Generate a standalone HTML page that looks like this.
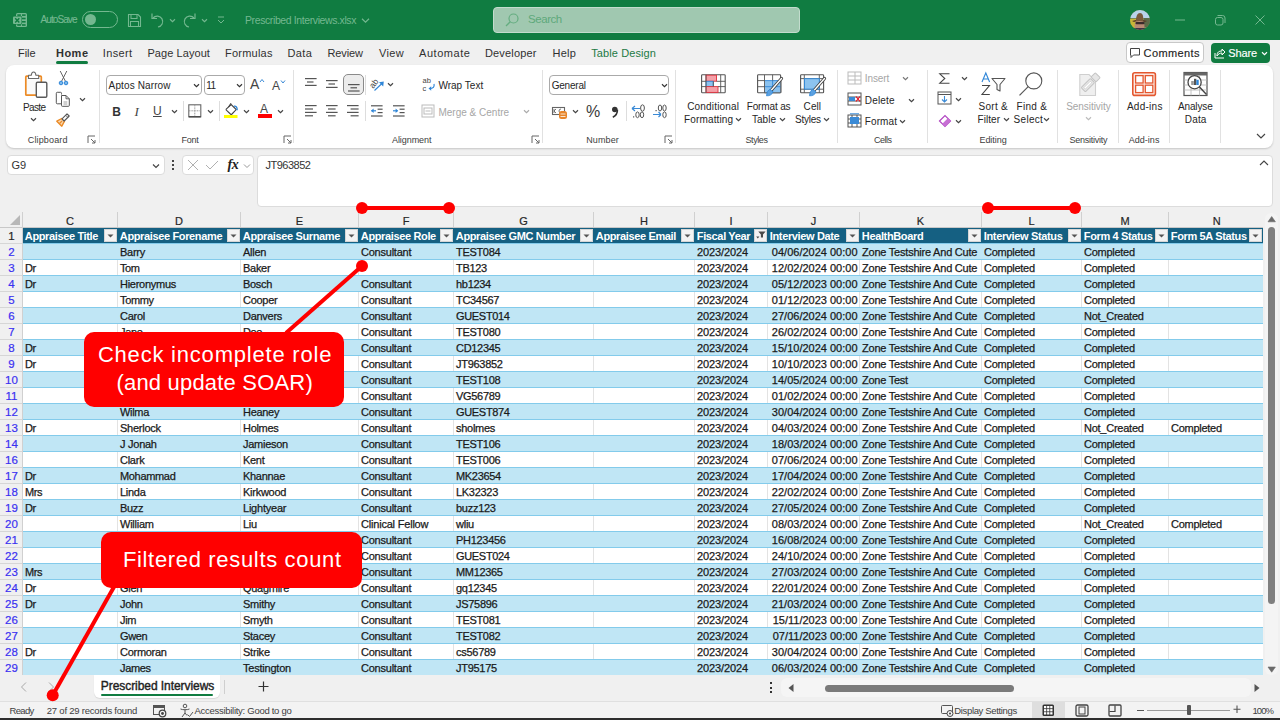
<!DOCTYPE html>
<html><head><meta charset="utf-8"><style>
html,body{margin:0;padding:0;}
body{width:1280px;height:720px;overflow:hidden;position:relative;background:#f0f0f0;font-family:"Liberation Sans", sans-serif;}
.t{position:absolute;white-space:nowrap;}
.b{position:absolute;}
svg.b{overflow:visible;}
</style></head><body>
<div class="b" style="left:0px;top:0px;width:1280px;height:40px;background:#107c41;"></div><svg class="b" style="left:13px;top:13px;" width="15" height="15" viewBox="0 0 15 15"><rect x="3" y="0" width="11" height="14" rx="1.5" fill="#74b890"/><g fill="#107c41"><rect x="4.3" y="1.3" width="3.6" height="1.6"/><rect x="9" y="1.3" width="3.6" height="1.6"/><rect x="9" y="4.7" width="3.6" height="1.6"/><rect x="9" y="8" width="3.6" height="1.6"/><rect x="4.3" y="11.2" width="3.6" height="1.6"/><rect x="9" y="11.2" width="3.6" height="1.6"/></g><rect x="-0.5" y="3" width="9.5" height="8.5" rx="1" fill="#107c41"/><rect x="0" y="3.5" width="8.5" height="7.5" rx="1" fill="#74b890"/><path d="M2.2 5.2 L6.3 9.5 M6.3 5.2 L2.2 9.5" stroke="#107c41" stroke-width="1.4"/></svg><div class="t" style="left:40.5px;top:13.3px;font-size:10px;line-height:14px;color:#74b890;font-weight:normal;letter-spacing:-0.911px;-webkit-text-stroke:0.15px currentColor;">AutoSave</div><div class="b" style="left:82px;top:11px;width:36px;height:17px;background:none;border:1.5px solid #74b890;border-radius:9px;box-sizing:border-box;"></div><div class="b" style="left:85px;top:14px;width:11px;height:11px;border-radius:50%;background:#74b890"></div><svg class="b" style="left:127px;top:13px;" width="15" height="15" viewBox="0 0 15 15"><path d="M1.5 1.5 H11 L13.5 4 V13.5 H1.5 Z" fill="none" stroke="#74b890" stroke-width="1.1"/><rect x="4" y="1.5" width="6" height="4" fill="none" stroke="#74b890" stroke-width="1"/><rect x="3.5" y="8.5" width="8" height="5" fill="none" stroke="#74b890" stroke-width="1"/></svg><svg class="b" style="left:150px;top:12px;" width="15" height="17" viewBox="0 0 15 17"><path d="M3 6 A5.5 5.5 0 1 1 8 15" fill="none" stroke="#74b890" stroke-width="1.2"/><path d="M2 1.5 V6.5 H7" fill="none" stroke="#74b890" stroke-width="1.2"/></svg><svg class="b" style="left:168.5px;top:17.5px;" width="7.0" height="5.0" viewBox="0 0 7.0 5.0"><path d="M1 1.25 L3.5 3.75 L6.0 1.25" fill="none" stroke="#74b890" stroke-width="1.15"/></svg><svg class="b" style="left:182px;top:12px;" width="15" height="17" viewBox="0 0 15 17"><path d="M12 6 A5.5 5.5 0 1 0 7 15" fill="none" stroke="#74b890" stroke-width="1.2"/><path d="M13 1.5 V6.5 H8" fill="none" stroke="#74b890" stroke-width="1.2"/></svg><svg class="b" style="left:200.5px;top:17.5px;" width="7.0" height="5.0" viewBox="0 0 7.0 5.0"><path d="M1 1.25 L3.5 3.75 L6.0 1.25" fill="none" stroke="#74b890" stroke-width="1.15"/></svg><svg class="b" style="left:216px;top:15px;" width="10" height="10" viewBox="0 0 10 10"><line x1="2" y1="2" x2="8" y2="2" stroke="#74b890"/><path d="M2 5 L5 8 L8 5" fill="none" stroke="#74b890"/></svg><div class="t" style="left:245px;top:13.25px;font-size:10.5px;line-height:14.5px;color:#74b890;font-weight:normal;letter-spacing:-0.396px;">Prescribed Interviews.xlsx</div><svg class="b" style="left:360.5px;top:16.5px;" width="9.0" height="7.0" viewBox="0 0 9.0 7.0"><path d="M1 1.75 L4.5 5.25 L8.0 1.75" fill="none" stroke="#74b890" stroke-width="1.15"/></svg><div class="b" style="left:493px;top:7px;width:307px;height:26px;background:#a0c8b0;border:1px solid #c3dccd;border-radius:4px;box-sizing:border-box;"></div><svg class="b" style="left:504px;top:12px;" width="16" height="16" viewBox="0 0 16 16"><circle cx="9.5" cy="6.5" r="4.5" fill="none" stroke="#64ad80" stroke-width="1.2"/><line x1="6.2" y1="9.8" x2="2" y2="14" stroke="#64ad80" stroke-width="1.3"/></svg><div class="t" style="left:528px;top:12.25px;font-size:11.5px;line-height:15.5px;color:#5ea97b;font-weight:normal;letter-spacing:-0.444px;">Search</div><svg class="b" style="left:1130px;top:10px;" width="20" height="20" viewBox="0 0 20 20"><defs><clipPath id="av"><circle cx="10" cy="10" r="10"/></clipPath></defs><g clip-path="url(#av)"><rect width="20" height="20" fill="#7f8a55"/><rect width="20" height="8" fill="#b9d3ea"/><rect x="0" y="9" width="6" height="9" fill="#c8b637"/><rect x="14" y="8" width="6" height="9" fill="#5c6a48"/><ellipse cx="9.5" cy="16" rx="5" ry="7" fill="#b88a73"/><path d="M2 11 Q9 8 17 11 L15 12 Q9 10 4 12 Z" fill="#5a3c28"/><path d="M6 11 Q6 3 10 3 Q14 3 13 11 Z" fill="#7a5a3c"/><rect x="5.5" y="12" width="9" height="2.2" rx="1" fill="#3a2a2a"/><rect x="0" y="18" width="20" height="3" fill="#3c3545"/></g></svg><svg class="b" style="left:1174px;top:14px;" width="12" height="12" viewBox="0 0 12 12"><line x1="1" y1="6" x2="11" y2="6" stroke="#74b890" stroke-width="1"/></svg><svg class="b" style="left:1214px;top:14px;" width="12" height="12" viewBox="0 0 12 12"><rect x="1.5" y="3.5" width="7.5" height="7.5" rx="2" fill="none" stroke="#74b890"/><path d="M3.5 1.5 H8.5 A2.5 2.5 0 0 1 11 4 V9" fill="none" stroke="#74b890"/></svg><svg class="b" style="left:1254px;top:14px;" width="12" height="12" viewBox="0 0 12 12"><path d="M1.5 1.5 L10.5 10.5 M10.5 1.5 L1.5 10.5" stroke="#74b890" stroke-width="1"/></svg><div class="t" style="left:18px;top:46.0px;font-size:11px;line-height:15px;color:#303030;font-weight:normal;letter-spacing:-0.073px;">File</div><div class="t" style="left:56px;top:46.0px;font-size:11px;line-height:15px;color:#303030;font-weight:bold;letter-spacing:0.479px;">Home</div><div class="t" style="left:102.8px;top:46.0px;font-size:11px;line-height:15px;color:#303030;font-weight:normal;letter-spacing:0.334px;">Insert</div><div class="t" style="left:147.4px;top:46.0px;font-size:11px;line-height:15px;color:#303030;font-weight:normal;letter-spacing:0.076px;">Page Layout</div><div class="t" style="left:225px;top:46.0px;font-size:11px;line-height:15px;color:#303030;font-weight:normal;letter-spacing:0.222px;">Formulas</div><div class="t" style="left:287.4px;top:46.0px;font-size:11px;line-height:15px;color:#303030;font-weight:normal;letter-spacing:0.383px;">Data</div><div class="t" style="left:327.4px;top:46.0px;font-size:11px;line-height:15px;color:#303030;font-weight:normal;letter-spacing:-0.092px;">Review</div><div class="t" style="left:378.9px;top:46.0px;font-size:11px;line-height:15px;color:#303030;font-weight:normal;letter-spacing:0.42px;">View</div><div class="t" style="left:419px;top:46.0px;font-size:11px;line-height:15px;color:#303030;font-weight:normal;letter-spacing:0.539px;">Automate</div><div class="t" style="left:484.9px;top:46.0px;font-size:11px;line-height:15px;color:#303030;font-weight:normal;letter-spacing:0.18px;">Developer</div><div class="t" style="left:552.4px;top:46.0px;font-size:11px;line-height:15px;color:#303030;font-weight:normal;letter-spacing:0.325px;">Help</div><div class="t" style="left:591.2px;top:46.0px;font-size:11px;line-height:15px;color:#1d7a45;font-weight:normal;letter-spacing:0.107px;">Table Design</div><div class="b" style="left:56px;top:61px;width:32px;height:3px;background:#107c41;border-radius:2px;"></div><div class="b" style="left:1126px;top:42px;width:78px;height:21px;background:#fff;border:1px solid #c8c8c8;border-radius:4px;box-sizing:border-box;"></div><svg class="b" style="left:1129px;top:47px;" width="12" height="12" viewBox="0 0 12 12"><path d="M1.5 1.5 H10.5 V8 H4.5 L2 10.5 V8 H1.5 Z" fill="none" stroke="#444" stroke-width="1" stroke-linejoin="round"/></svg><div class="t" style="left:1143.6px;top:45.5px;font-size:11px;line-height:15px;color:#242424;font-weight:normal;letter-spacing:0.387px;-webkit-text-stroke:0.15px currentColor;">Comments</div><div class="b" style="left:1211px;top:43px;width:59px;height:20px;background:#107c41;border-radius:4px;"></div><svg class="b" style="left:1213px;top:46px;" width="14" height="14" viewBox="0 0 14 14"><path d="M2 7 V12 H11" fill="none" stroke="#fff" stroke-width="1"/><path d="M4 10 C4 6 6 5 9 5 V3 L12 6 L9 9 V7 C7 7 5 8 4 10 Z" fill="none" stroke="#fff" stroke-width="1"/></svg><div class="t" style="left:1228.3px;top:45.5px;font-size:11px;line-height:15px;color:#fff;font-weight:normal;letter-spacing:-0.144px;-webkit-text-stroke:0.15px currentColor;">Share</div><svg class="b" style="left:1260.5px;top:50.5px;" width="7.0" height="5.0" viewBox="0 0 7.0 5.0"><path d="M1 1.25 L3.5 3.75 L6.0 1.25" fill="none" stroke="#fff" stroke-width="1.15"/></svg><div class="b" style="left:6px;top:65px;width:1267px;height:83px;background:#fff;border-radius:8px;box-shadow:0 1px 2px rgba(0,0,0,0.18);"></div><div class="b" style="left:99px;top:70px;width:1px;height:73px;background:#e1e1e1;"></div><div class="b" style="left:293px;top:70px;width:1px;height:73px;background:#e1e1e1;"></div><div class="b" style="left:542px;top:70px;width:1px;height:73px;background:#e1e1e1;"></div><div class="b" style="left:675px;top:70px;width:1px;height:73px;background:#e1e1e1;"></div><div class="b" style="left:837px;top:70px;width:1px;height:73px;background:#e1e1e1;"></div><div class="b" style="left:927px;top:70px;width:1px;height:73px;background:#e1e1e1;"></div><div class="b" style="left:1057px;top:70px;width:1px;height:73px;background:#e1e1e1;"></div><div class="b" style="left:1118px;top:70px;width:1px;height:73px;background:#e1e1e1;"></div><div class="b" style="left:1169px;top:70px;width:1px;height:73px;background:#e1e1e1;"></div><div class="b" style="left:1220px;top:70px;width:1px;height:73px;background:#e1e1e1;"></div><div class="t" style="left:27.8px;top:134.0px;font-size:9px;line-height:13px;color:#404040;font-weight:normal;letter-spacing:0.138px;">Clipboard</div><div class="t" style="left:181.5px;top:134.0px;font-size:9px;line-height:13px;color:#404040;font-weight:normal;letter-spacing:-0.233px;">Font</div><div class="t" style="left:392px;top:134.0px;font-size:9px;line-height:13px;color:#404040;font-weight:normal;letter-spacing:-0.075px;">Alignment</div><div class="t" style="left:586.2px;top:134.0px;font-size:9px;line-height:13px;color:#404040;font-weight:normal;letter-spacing:0.12px;">Number</div><div class="t" style="left:745.5px;top:134.0px;font-size:9px;line-height:13px;color:#404040;font-weight:normal;letter-spacing:-0.42px;">Styles</div><div class="t" style="left:874px;top:134.0px;font-size:9px;line-height:13px;color:#404040;font-weight:normal;letter-spacing:-0.475px;">Cells</div><div class="t" style="left:979.4px;top:134.0px;font-size:9px;line-height:13px;color:#404040;font-weight:normal;letter-spacing:-0.017px;">Editing</div><div class="t" style="left:1069.4px;top:134.0px;font-size:9px;line-height:13px;color:#404040;font-weight:normal;letter-spacing:-0.23px;">Sensitivity</div><div class="t" style="left:1128.7px;top:134.0px;font-size:9px;line-height:13px;color:#404040;font-weight:normal;letter-spacing:0.033px;">Add-ins</div><svg class="b" style="left:87px;top:135px;" width="9" height="9" viewBox="0 0 9 9"><path d="M1 8 V1 H8" fill="none" stroke="#666"/><path d="M4 4 L8 8 M5 8 H8 V5" fill="none" stroke="#666"/></svg><svg class="b" style="left:283px;top:135px;" width="9" height="9" viewBox="0 0 9 9"><path d="M1 8 V1 H8" fill="none" stroke="#666"/><path d="M4 4 L8 8 M5 8 H8 V5" fill="none" stroke="#666"/></svg><svg class="b" style="left:531px;top:135px;" width="9" height="9" viewBox="0 0 9 9"><path d="M1 8 V1 H8" fill="none" stroke="#666"/><path d="M4 4 L8 8 M5 8 H8 V5" fill="none" stroke="#666"/></svg><svg class="b" style="left:664px;top:135px;" width="9" height="9" viewBox="0 0 9 9"><path d="M1 8 V1 H8" fill="none" stroke="#666"/><path d="M4 4 L8 8 M5 8 H8 V5" fill="none" stroke="#666"/></svg><svg class="b" style="left:24px;top:71px;" width="25" height="28" viewBox="0 0 25 28"><rect x="1.8" y="5.2" width="15.5" height="19" rx="0.8" fill="#fafafa" stroke="#ec8b26" stroke-width="1.7"/><path d="M4.5 7.5 V4.3 H7.3 Q7.5 1 9.6 1 Q11.7 1 11.9 4.3 H14.7 V7.5 Z" fill="#fff" stroke="#6a6a6a" stroke-width="1.1" stroke-linejoin="round"/><rect x="12.3" y="11.3" width="10.5" height="15" rx="1.2" fill="#fff" stroke="#5a5a5a" stroke-width="1.4"/></svg><div class="t" style="left:22.9px;top:101.0px;font-size:10px;line-height:14px;color:#262626;font-weight:normal;letter-spacing:-0.595px;">Paste</div><svg class="b" style="left:30.1px;top:117.0px;" width="7.0" height="5.0" viewBox="0 0 7.0 5.0"><path d="M1 1.25 L3.5 3.75 L6.0 1.25" fill="none" stroke="#444" stroke-width="1.15"/></svg><svg class="b" style="left:58px;top:70px;" width="11" height="16" viewBox="0 0 11 16"><path d="M2.2 1 L7.3 11 M8.8 1 L3.7 11" stroke="#555" stroke-width="0.9"/><circle cx="3" cy="13" r="1.8" fill="#7ab8ec" stroke="#2f86d8" stroke-width="1"/><circle cx="8" cy="13" r="1.8" fill="#7ab8ec" stroke="#2f86d8" stroke-width="1"/></svg><svg class="b" style="left:55px;top:91px;" width="16" height="16" viewBox="0 0 16 16"><path d="M6 12.8 H2.3 A1 1 0 0 1 1.3 11.8 V2.3 A1 1 0 0 1 2.3 1.3 H5.5 A1 1 0 0 1 6.5 2.3 V3.5" fill="#fff" stroke="#555" stroke-width="1"/><path d="M6.5 4.5 H11 L14.3 7.8 V14.5 A0.8 0.8 0 0 1 13.5 15.3 H7.3 A0.8 0.8 0 0 1 6.5 14.5 Z" fill="#fff" stroke="#555" stroke-width="1"/><path d="M11 4.5 V7.8 H14.3" fill="none" stroke="#555" stroke-width="0.9"/><line x1="8.5" y1="11" x2="12.3" y2="11" stroke="#888" stroke-width="0.8"/><line x1="8.5" y1="13" x2="12.3" y2="13" stroke="#888" stroke-width="0.8"/></svg><svg class="b" style="left:79.0px;top:97.0px;" width="7.0" height="5.0" viewBox="0 0 7.0 5.0"><path d="M1 1.25 L3.5 3.75 L6.0 1.25" fill="none" stroke="#444" stroke-width="1.15"/></svg><svg class="b" style="left:56px;top:113px;" width="14" height="14" viewBox="0 0 14 14"><path d="M0.8 8.2 L5.8 5.5 L8.5 8.2 L5.8 13.2 Z" fill="#f7d8b5" stroke="#ec8b26" stroke-width="1.4" stroke-linejoin="round"/><path d="M3.5 10.5 L6 8" stroke="#ec8b26" stroke-width="1.2"/><path d="M6 5.8 L8.2 8 L13.2 3 L11 0.8 Z" fill="#fff" stroke="#555" stroke-width="1.1" stroke-linejoin="round"/><path d="M9.6 2.2 L11.8 4.4" stroke="#555" stroke-width="0.9"/></svg><div class="b" style="left:106px;top:75px;width:96px;height:20px;background:#fff;border:1px solid #aaa;border-radius:4px;box-sizing:border-box;"></div><div class="t" style="left:108.6px;top:78.8px;font-size:10px;line-height:14px;color:#262626;font-weight:normal;letter-spacing:0.12px;">Aptos Narrow</div><svg class="b" style="left:192.5px;top:83.0px;" width="7.0" height="5.0" viewBox="0 0 7.0 5.0"><path d="M1 1.25 L3.5 3.75 L6.0 1.25" fill="none" stroke="#333" stroke-width="1.15"/></svg><div class="b" style="left:204px;top:75px;width:41px;height:20px;background:#fff;border:1px solid #aaa;border-radius:4px;box-sizing:border-box;"></div><div class="t" style="left:206.3px;top:78.8px;font-size:10px;line-height:14px;color:#262626;font-weight:normal;letter-spacing:-0.691px;">11</div><svg class="b" style="left:235.5px;top:83.0px;" width="7.0" height="5.0" viewBox="0 0 7.0 5.0"><path d="M1 1.25 L3.5 3.75 L6.0 1.25" fill="none" stroke="#333" stroke-width="1.15"/></svg><div class="t" style="left:250px;top:75.0px;font-size:14px;line-height:18px;color:#444;font-weight:normal;letter-spacing:0px;">A</div><svg class="b" style="left:259px;top:78px;" width="6" height="5" viewBox="0 0 6 5"><path d="M1 4 L3 1.5 L5 4" fill="none" stroke="#3a8ad6" stroke-width="1"/></svg><div class="t" style="left:272px;top:78.0px;font-size:12px;line-height:16px;color:#444;font-weight:normal;letter-spacing:0px;">A</div><svg class="b" style="left:280px;top:79px;" width="6" height="5" viewBox="0 0 6 5"><path d="M1 1.5 L3 4 L5 1.5" fill="none" stroke="#3a8ad6" stroke-width="1"/></svg><div class="t" style="left:112.3px;top:103.5px;font-size:12px;line-height:16px;color:#333;font-weight:bold;letter-spacing:0px;">B</div><div class="t" style="left:134.5px;top:103.0px;font-size:13px;line-height:17px;color:#444;font-weight:normal;letter-spacing:0px;font-family:Liberation Serif;"><i>I</i></div><div class="t" style="left:153px;top:103.0px;font-size:12px;line-height:16px;color:#444;font-weight:normal;letter-spacing:0px;"><u>U</u></div><svg class="b" style="left:170.5px;top:109.0px;" width="7.0" height="5.0" viewBox="0 0 7.0 5.0"><path d="M1 1.25 L3.5 3.75 L6.0 1.25" fill="none" stroke="#444" stroke-width="1.15"/></svg><div class="b" style="left:183px;top:101px;width:1px;height:20px;background:#ddd;"></div><svg class="b" style="left:188px;top:104px;" width="14" height="14" viewBox="0 0 14 14"><rect x="0.8" y="0.8" width="12" height="12" fill="none" stroke="#666" stroke-width="1.1"/><line x1="6.8" y1="1" x2="6.8" y2="13" stroke="#999" stroke-dasharray="1 0.6"/><line x1="1" y1="6.8" x2="13" y2="6.8" stroke="#999" stroke-dasharray="1 0.6"/><line x1="0.8" y1="12.8" x2="12.8" y2="12.8" stroke="#444" stroke-width="1.3"/></svg><svg class="b" style="left:206.5px;top:109.0px;" width="7.0" height="5.0" viewBox="0 0 7.0 5.0"><path d="M1 1.25 L3.5 3.75 L6.0 1.25" fill="none" stroke="#444" stroke-width="1.15"/></svg><div class="b" style="left:219px;top:101px;width:1px;height:20px;background:#ddd;"></div><svg class="b" style="left:224px;top:102px;" width="15" height="18" viewBox="0 0 15 18"><path d="M2.2 7.2 L7.2 2.6 L12.2 7.6 L8 12 Q7.2 12.7 6.4 12 L2.6 8.4 Q1.8 7.8 2.2 7.2 Z" fill="none" stroke="#444" stroke-width="1.1"/><path d="M4.5 5 L7 1.2" stroke="#444" stroke-width="1.1"/><path d="M10 4.2 Q13.3 3.8 13.2 8.2" fill="none" stroke="#2f86d8" stroke-width="1.3"/><rect x="0" y="13" width="13.5" height="3" fill="#ffff00"/></svg><svg class="b" style="left:242.5px;top:109.0px;" width="7.0" height="5.0" viewBox="0 0 7.0 5.0"><path d="M1 1.25 L3.5 3.75 L6.0 1.25" fill="none" stroke="#444" stroke-width="1.15"/></svg><div class="t" style="left:260px;top:101.0px;font-size:12px;line-height:16px;color:#444;font-weight:normal;letter-spacing:0px;">A</div><div class="b" style="left:258px;top:114.3px;width:13.5px;height:3.7px;background:#ff0000;"></div><svg class="b" style="left:276.5px;top:109.0px;" width="7.0" height="5.0" viewBox="0 0 7.0 5.0"><path d="M1 1.25 L3.5 3.75 L6.0 1.25" fill="none" stroke="#444" stroke-width="1.15"/></svg><svg class="b" style="left:305px;top:77.8px;" width="14" height="14" viewBox="0 0 14 14"><rect x="0" y="0.0" width="11.6" height="1.2" fill="#555"/><rect x="2" y="3.4" width="6.5" height="1.2" fill="#555"/><rect x="0" y="6.8" width="11.6" height="1.2" fill="#555"/></svg><svg class="b" style="left:326px;top:80.1px;" width="14" height="14" viewBox="0 0 14 14"><rect x="0" y="0.0" width="11.6" height="1.2" fill="#555"/><rect x="2.5" y="3.4" width="6.5" height="1.2" fill="#555"/><rect x="0" y="6.8" width="11.6" height="1.2" fill="#555"/></svg><div class="b" style="left:343px;top:74px;width:21px;height:21px;background:#ececec;border:1px solid #8a8a8a;border-radius:5px;box-sizing:border-box;"></div><svg class="b" style="left:347.7px;top:83.6px;" width="14" height="14" viewBox="0 0 14 14"><rect x="0" y="0.0" width="11.6" height="1.2" fill="#555"/><rect x="2.5" y="3.2" width="6.5" height="1.2" fill="#555"/><rect x="0" y="6.4" width="11.6" height="1.2" fill="#555"/></svg><div class="b" style="left:365px;top:75px;width:1px;height:20px;background:#ddd;"></div><svg class="b" style="left:369px;top:76px;" width="17" height="16" viewBox="0 0 17 16"><text x="0" y="0" font-size="8.5" fill="#444" font-family="Liberation Sans" transform="translate(4.2 13) rotate(-52)">ab</text><line x1="5.5" y1="14.5" x2="13.5" y2="7" stroke="#2f86d8" stroke-width="1.1"/><path d="M10 6.2 L14.8 5.6 L14.2 10.4 Z" fill="#2f86d8"/></svg><svg class="b" style="left:387.0px;top:82.0px;" width="7.0" height="5.0" viewBox="0 0 7.0 5.0"><path d="M1 1.25 L3.5 3.75 L6.0 1.25" fill="none" stroke="#444" stroke-width="1.15"/></svg><svg class="b" style="left:305px;top:105.2px;" width="14" height="14" viewBox="0 0 14 14"><rect x="0" y="0.0" width="11.6" height="1.2" fill="#555"/><rect x="0" y="3.4" width="8" height="1.2" fill="#555"/><rect x="0" y="6.8" width="11.6" height="1.2" fill="#555"/><rect x="0" y="10.2" width="8" height="1.2" fill="#555"/></svg><svg class="b" style="left:326px;top:105.2px;" width="14" height="14" viewBox="0 0 14 14"><rect x="0" y="0.0" width="11.6" height="1.2" fill="#555"/><rect x="2" y="3.4" width="7.6" height="1.2" fill="#555"/><rect x="0" y="6.8" width="11.6" height="1.2" fill="#555"/><rect x="2" y="10.2" width="7.6" height="1.2" fill="#555"/></svg><svg class="b" style="left:347.4px;top:105.2px;" width="14" height="14" viewBox="0 0 14 14"><rect x="0" y="0.0" width="11.6" height="1.2" fill="#555"/><rect x="3.6" y="3.4" width="8" height="1.2" fill="#555"/><rect x="0" y="6.8" width="11.6" height="1.2" fill="#555"/><rect x="3.6" y="10.2" width="8" height="1.2" fill="#555"/></svg><div class="b" style="left:365px;top:101px;width:1px;height:20px;background:#ddd;"></div><svg class="b" style="left:371px;top:105px;" width="14" height="14" viewBox="0 0 14 14"><rect x="0" y="0.2" width="11.6" height="1.2" fill="#555"/><rect x="6.6" y="3.6" width="5" height="1.2" fill="#555"/><rect x="6.6" y="7" width="5" height="1.2" fill="#555"/><rect x="0" y="10.4" width="11.6" height="1.2" fill="#555"/><path d="M0.3 5.8 H5" stroke="#2f86d8" stroke-width="1.2"/><path d="M0 5.8 L2.6 3.6 V8 Z" fill="#2f86d8"/></svg><svg class="b" style="left:392.5px;top:105px;" width="14" height="14" viewBox="0 0 14 14"><rect x="0" y="0.2" width="11.6" height="1.2" fill="#555"/><rect x="6.6" y="3.6" width="5" height="1.2" fill="#555"/><rect x="6.6" y="7" width="5" height="1.2" fill="#555"/><rect x="0" y="10.4" width="11.6" height="1.2" fill="#555"/><path d="M0 5.8 H4.5" stroke="#2f86d8" stroke-width="1.2"/><path d="M5.2 5.8 L2.6 3.6 V8 Z" fill="#2f86d8"/></svg><svg class="b" style="left:422px;top:76px;" width="14" height="17" viewBox="0 0 14 17"><text x="0.5" y="6.8" font-size="7.5" fill="#444" font-family="Liberation Sans">ab</text><text x="0.5" y="14.5" font-size="7.5" fill="#444" font-family="Liberation Sans">c</text><path d="M12 8 Q13 12.5 7.5 12.5" fill="none" stroke="#2f86d8" stroke-width="1.2"/><path d="M6.5 12.5 L9.2 10.3 V14.7 Z" fill="#2f86d8"/></svg><div class="t" style="left:438.4px;top:78.8px;font-size:10px;line-height:14px;color:#262626;font-weight:normal;letter-spacing:0.02px;">Wrap Text</div><svg class="b" style="left:421px;top:104px;" width="14" height="14" viewBox="0 0 14 14"><rect x="1" y="1" width="12" height="12" fill="none" stroke="#bbb"/><rect x="3" y="4" width="8" height="6" fill="none" stroke="#bbb"/><path d="M4.5 7 H9.5" stroke="#bbb"/></svg><div class="t" style="left:438.4px;top:105.6px;font-size:10px;line-height:14px;color:#a6a6a6;font-weight:normal;letter-spacing:0.008px;">Merge &amp; Centre</div><svg class="b" style="left:522.5px;top:109.0px;" width="7.0" height="5.0" viewBox="0 0 7.0 5.0"><path d="M1 1.25 L3.5 3.75 L6.0 1.25" fill="none" stroke="#aaa" stroke-width="1.15"/></svg><div class="b" style="left:549px;top:75px;width:120px;height:20px;background:#fff;border:1px solid #aaa;border-radius:4px;box-sizing:border-box;"></div><div class="t" style="left:551.7px;top:78.8px;font-size:10px;line-height:14px;color:#262626;font-weight:normal;letter-spacing:-0.213px;">General</div><svg class="b" style="left:660.5px;top:83.0px;" width="7.0" height="5.0" viewBox="0 0 7.0 5.0"><path d="M1 1.25 L3.5 3.75 L6.0 1.25" fill="none" stroke="#333" stroke-width="1.15"/></svg><svg class="b" style="left:551px;top:105px;" width="17" height="14" viewBox="0 0 17 14"><rect x="1.5" y="2.5" width="12" height="7" fill="none" stroke="#666" stroke-width="1.1"/><path d="M3 4 V8 M3 6 L5 4 M3 6 L5 8" stroke="#666" stroke-width="0.9" fill="none"/><path d="M10 4 A1.8 1.8 0 1 0 10 8" stroke="#666" stroke-width="0.9" fill="none"/><rect x="8" y="6" width="8" height="8" rx="2.5" fill="#e8862a"/><path d="M9.5 9 H14.5 M9.5 11.5 H14.5" stroke="#fff" stroke-width="0.8"/></svg><svg class="b" style="left:571.5px;top:108.5px;" width="7.0" height="5.0" viewBox="0 0 7.0 5.0"><path d="M1 1.25 L3.5 3.75 L6.0 1.25" fill="none" stroke="#444" stroke-width="1.15"/></svg><div class="t" style="left:586px;top:102.0px;font-size:16px;line-height:20px;color:#3a3a3a;font-weight:normal;letter-spacing:0px;">%</div><svg class="b" style="left:610px;top:105px;" width="10" height="13" viewBox="0 0 10 13"><circle cx="4.8" cy="4.5" r="2.8" fill="#333"/><path d="M7.4 4.8 Q7.6 10 2.8 12.3" fill="none" stroke="#333" stroke-width="1.6"/></svg><div class="b" style="left:626px;top:101px;width:1px;height:20px;background:#ddd;"></div><svg class="b" style="left:630px;top:103px;" width="16" height="16" viewBox="0 0 16 16"><path d="M2 5.5 H10 M2 5.5 L5 3 M2 5.5 L5 8" fill="none" stroke="#3a8ad6" stroke-width="1.2"/><ellipse cx="12.5" cy="5" rx="1.9" ry="3.2" fill="none" stroke="#555" stroke-width="1"/><rect x="3" y="13.3" width="1.2" height="1.2" fill="#555"/><ellipse cx="7.5" cy="11.8" rx="1.7" ry="2.9" fill="none" stroke="#555" stroke-width="1"/><ellipse cx="12" cy="11.8" rx="1.7" ry="2.9" fill="none" stroke="#555" stroke-width="1"/></svg><svg class="b" style="left:652px;top:103px;" width="16" height="16" viewBox="0 0 16 16"><rect x="3.5" y="7" width="1.2" height="1.2" fill="#555"/><ellipse cx="8" cy="5" rx="1.7" ry="3" fill="none" stroke="#555" stroke-width="1"/><ellipse cx="12.5" cy="5" rx="1.7" ry="3" fill="none" stroke="#555" stroke-width="1"/><path d="M1 11.5 H9 M9 11.5 L6.5 9 M9 11.5 L6.5 14" fill="none" stroke="#3a8ad6" stroke-width="1.2"/><ellipse cx="12.5" cy="11.8" rx="1.7" ry="2.9" fill="none" stroke="#555" stroke-width="1"/></svg><svg class="b" style="left:701px;top:74px;" width="26" height="20" viewBox="0 0 26 20"><rect x="0.6" y="0.8" width="23.6" height="18" rx="0.8" fill="#fff" stroke="#555" stroke-width="1.1"/><rect x="5" y="1.2" width="10.5" height="6" fill="#f4a0a8" stroke="#e0303c" stroke-width="0.9"/><rect x="5" y="7.3" width="7.3" height="5.2" fill="#8cc3f0" stroke="#2f86d8" stroke-width="0.9"/><rect x="5" y="12.6" width="12" height="5.8" fill="#f4a0a8" stroke="#e0303c" stroke-width="0.9"/><path d="M0.6 7.3 H5 M15.5 7.3 H24.2 M0.6 12.6 H5 M17 12.6 H24.2 M12.3 7.3 V12.6 M19.7 0.8 V18.8 M5 0.8 V18.8" stroke="#555" stroke-width="0.9" fill="none"/></svg><div class="t" style="left:687.2px;top:99.8px;font-size:10px;line-height:14px;color:#262626;font-weight:normal;letter-spacing:0.177px;">Conditional</div><div class="t" style="left:684.1px;top:113.2px;font-size:10px;line-height:14px;color:#262626;font-weight:normal;letter-spacing:0.134px;">Formatting</div><svg class="b" style="left:734.5px;top:117.0px;" width="7.0" height="5.0" viewBox="0 0 7.0 5.0"><path d="M1 1.25 L3.5 3.75 L6.0 1.25" fill="none" stroke="#444" stroke-width="1.15"/></svg><svg class="b" style="left:757px;top:74px;" width="28" height="24" viewBox="0 0 28 24"><rect x="0.6" y="0.8" width="23" height="18" rx="0.8" fill="#fff" stroke="#555" stroke-width="1.1"/><rect x="7.5" y="6.6" width="16" height="12.2" fill="#8cc3f0"/><path d="M7.5 6.6 H23.6 M7.5 12.7 H23.6 M15.6 6.6 V18.8" stroke="#2f86d8" stroke-width="0.9"/><path d="M0.6 6.6 H7.5 M0.6 12.7 H7.5 M7.5 0.8 V18.8 M15.6 0.8 V6.6 M24 6.6 V18.8 M7.5 18.8 H23.6" stroke="#555" stroke-width="0.9" fill="none"/><path d="M24.5 4.5 L14 16.5" stroke="#444" stroke-width="3.2" stroke-linecap="round"/><path d="M24.5 4.5 L14 16.5" stroke="#fff" stroke-width="1.4" stroke-linecap="round"/><path d="M12.8 15.3 Q9.5 17 9.5 21.8 Q14.5 22 16 17.8 Z" fill="#5aa0e0" stroke="#2f86d8" stroke-width="0.8"/></svg><div class="t" style="left:746.7px;top:99.8px;font-size:10px;line-height:14px;color:#262626;font-weight:normal;letter-spacing:-0.139px;">Format as</div><div class="t" style="left:752px;top:113.2px;font-size:10px;line-height:14px;color:#262626;font-weight:normal;letter-spacing:0.023px;">Table</div><svg class="b" style="left:778.5px;top:117.0px;" width="7.0" height="5.0" viewBox="0 0 7.0 5.0"><path d="M1 1.25 L3.5 3.75 L6.0 1.25" fill="none" stroke="#444" stroke-width="1.15"/></svg><svg class="b" style="left:800px;top:74px;" width="28" height="24" viewBox="0 0 28 24"><rect x="0.6" y="0.8" width="23" height="18" rx="0.8" fill="#fff" stroke="#555" stroke-width="1.1"/><path d="M0.6 4.6 H23.6 M0.6 15.2 H23.6 M4.3 0.8 V18.8 M19.3 0.8 V18.8" stroke="#555" stroke-width="0.9" fill="none"/><rect x="4.5" y="4.7" width="14.8" height="10.4" fill="#8cc3f0" stroke="#2f86d8" stroke-width="0.9"/><path d="M24.5 4.5 L14 16.5" stroke="#444" stroke-width="3.2" stroke-linecap="round"/><path d="M24.5 4.5 L14 16.5" stroke="#fff" stroke-width="1.4" stroke-linecap="round"/><path d="M12.8 15.3 Q9.5 17 9.5 21.8 Q14.5 22 16 17.8 Z" fill="#5aa0e0" stroke="#2f86d8" stroke-width="0.8"/></svg><div class="t" style="left:803.6px;top:99.8px;font-size:10px;line-height:14px;color:#262626;font-weight:normal;letter-spacing:0.06px;">Cell</div><div class="t" style="left:795px;top:113.2px;font-size:10px;line-height:14px;color:#262626;font-weight:normal;letter-spacing:-0.247px;">Styles</div><svg class="b" style="left:822.5px;top:117.0px;" width="7.0" height="5.0" viewBox="0 0 7.0 5.0"><path d="M1 1.25 L3.5 3.75 L6.0 1.25" fill="none" stroke="#444" stroke-width="1.15"/></svg><svg class="b" style="left:847px;top:71px;" width="15" height="14" viewBox="0 0 15 14"><rect x="1" y="1" width="13" height="12" fill="none" stroke="#bbb"/><line x1="1" y1="5" x2="14" y2="5" stroke="#bbb"/><line x1="1" y1="9" x2="14" y2="9" stroke="#bbb"/><line x1="8" y1="1" x2="8" y2="13" stroke="#bbb"/></svg><div class="t" style="left:864.8px;top:72.1px;font-size:10px;line-height:14px;color:#a6a6a6;font-weight:normal;letter-spacing:-0.123px;">Insert</div><svg class="b" style="left:901.5px;top:76.0px;" width="7.0" height="5.0" viewBox="0 0 7.0 5.0"><path d="M1 1.25 L3.5 3.75 L6.0 1.25" fill="none" stroke="#777" stroke-width="1.15"/></svg><svg class="b" style="left:847px;top:92px;" width="15" height="15" viewBox="0 0 15 15"><rect x="1" y="1" width="13" height="12" fill="none" stroke="#555"/><line x1="1" y1="5" x2="14" y2="5" stroke="#555"/><line x1="1" y1="9" x2="14" y2="9" stroke="#555"/><rect x="2" y="5" width="6" height="4" fill="#3a8ad6"/><path d="M9 4.5 L13 9.5 M13 4.5 L9 9.5" stroke="#e81123" stroke-width="1.2"/></svg><div class="t" style="left:864.8px;top:93.6px;font-size:10px;line-height:14px;color:#262626;font-weight:normal;letter-spacing:0.159px;">Delete</div><svg class="b" style="left:907.5px;top:97.5px;" width="7.0" height="5.0" viewBox="0 0 7.0 5.0"><path d="M1 1.25 L3.5 3.75 L6.0 1.25" fill="none" stroke="#444" stroke-width="1.15"/></svg><svg class="b" style="left:847px;top:113px;" width="15" height="16" viewBox="0 0 15 16"><rect x="1" y="2" width="13" height="12" fill="none" stroke="#555"/><line x1="1" y1="6" x2="14" y2="6" stroke="#555"/><line x1="1" y1="10" x2="14" y2="10" stroke="#555"/><line x1="5" y1="2" x2="5" y2="14" stroke="#555"/><line x1="10" y1="2" x2="10" y2="14" stroke="#555"/><rect x="3" y="4" width="9" height="7" fill="#3a8ad6"/><line x1="3" y1="0.8" x2="12" y2="0.8" stroke="#3a8ad6"/></svg><div class="t" style="left:864.8px;top:114.8px;font-size:10px;line-height:14px;color:#262626;font-weight:normal;letter-spacing:0.106px;">Format</div><svg class="b" style="left:898.5px;top:118.5px;" width="7.0" height="5.0" viewBox="0 0 7.0 5.0"><path d="M1 1.25 L3.5 3.75 L6.0 1.25" fill="none" stroke="#444" stroke-width="1.15"/></svg><svg class="b" style="left:938px;top:72px;" width="13" height="13" viewBox="0 0 13 13"><path d="M11.5 1.8 H1.8 L6.8 6.5 L1.8 11.2 H11.5" fill="none" stroke="#444" stroke-width="1.1" stroke-linejoin="miter"/></svg><svg class="b" style="left:960.5px;top:76.0px;" width="7.0" height="5.0" viewBox="0 0 7.0 5.0"><path d="M1 1.25 L3.5 3.75 L6.0 1.25" fill="none" stroke="#444" stroke-width="1.15"/></svg><svg class="b" style="left:937px;top:91px;" width="16" height="15" viewBox="0 0 16 15"><rect x="1" y="1" width="13" height="12" fill="none" stroke="#555"/><line x1="1" y1="3.5" x2="14" y2="3.5" stroke="#555"/><path d="M7.5 5 V11 M5 8.5 L7.5 11 L10 8.5" fill="none" stroke="#3a8ad6" stroke-width="1.1"/></svg><svg class="b" style="left:954.5px;top:97.0px;" width="7.0" height="5.0" viewBox="0 0 7.0 5.0"><path d="M1 1.25 L3.5 3.75 L6.0 1.25" fill="none" stroke="#444" stroke-width="1.15"/></svg><svg class="b" style="left:938px;top:113px;" width="16" height="14" viewBox="0 0 16 14"><path d="M1.5 8 L7 2.5 L12.5 8 L7 13.5 Z" fill="none" stroke="#b146c2" stroke-width="1.2"/><path d="M4.3 10.8 L9.8 5.3 L12.5 8 L7 13.5 Z" fill="#c770d4"/></svg><svg class="b" style="left:954.5px;top:118.5px;" width="7.0" height="5.0" viewBox="0 0 7.0 5.0"><path d="M1 1.25 L3.5 3.75 L6.0 1.25" fill="none" stroke="#444" stroke-width="1.15"/></svg><svg class="b" style="left:980px;top:72px;" width="27" height="24" viewBox="0 0 27 24"><path d="M2 10 L5.8 1 L9.6 10 M3.3 7 H8.3" fill="none" stroke="#2f86d8" stroke-width="1.1"/><path d="M2 13.5 H9.5 L2 22.5 H9.8" fill="none" stroke="#444" stroke-width="1.1"/><path d="M12 6.5 H25 L20 12.5 V19 L17 17.5 V12.5 Z" fill="#fff" stroke="#555" stroke-width="1.1" stroke-linejoin="round"/></svg><div class="t" style="left:978.4px;top:99.8px;font-size:10px;line-height:14px;color:#262626;font-weight:normal;letter-spacing:0.321px;">Sort &amp;</div><div class="t" style="left:977.5px;top:113.2px;font-size:10px;line-height:14px;color:#262626;font-weight:normal;letter-spacing:0.056px;">Filter</div><svg class="b" style="left:1002.5px;top:117.0px;" width="7.0" height="5.0" viewBox="0 0 7.0 5.0"><path d="M1 1.25 L3.5 3.75 L6.0 1.25" fill="none" stroke="#444" stroke-width="1.15"/></svg><svg class="b" style="left:1017px;top:71px;" width="28" height="26" viewBox="0 0 28 26"><circle cx="16.8" cy="9.9" r="8" fill="#fff" stroke="#555" stroke-width="1.1"/><line x1="11.2" y1="15.6" x2="2.5" y2="24.3" stroke="#555" stroke-width="1.2"/></svg><div class="t" style="left:1016.5px;top:99.8px;font-size:10px;line-height:14px;color:#262626;font-weight:normal;letter-spacing:0.279px;">Find &amp;</div><div class="t" style="left:1013.6px;top:113.2px;font-size:10px;line-height:14px;color:#262626;font-weight:normal;letter-spacing:0.301px;">Select</div><svg class="b" style="left:1042.5px;top:117.0px;" width="7.0" height="5.0" viewBox="0 0 7.0 5.0"><path d="M1 1.25 L3.5 3.75 L6.0 1.25" fill="none" stroke="#444" stroke-width="1.15"/></svg><svg class="b" style="left:1078px;top:71px;" width="25" height="26" viewBox="0 0 25 26"><path d="M1.8 3.5 H11 L17.5 10 V24.5 H1.8 Z" fill="#efefef" stroke="#cfcfcf" stroke-width="1.1"/><g transform="rotate(-45 12 12)"><rect x="2.5" y="9" width="13" height="6" rx="1" fill="#e6e6e6" stroke="#c4c4c4" stroke-width="1"/><rect x="4.5" y="11" width="9" height="2" fill="#fff" stroke="#c4c4c4" stroke-width="0.6"/><rect x="17" y="8.5" width="6" height="7" rx="0.8" fill="#e6e6e6" stroke="#c4c4c4" stroke-width="1"/></g></svg><div class="t" style="left:1066.2px;top:99.8px;font-size:10px;line-height:14px;color:#a6a6a6;font-weight:normal;letter-spacing:-0.052px;">Sensitivity</div><svg class="b" style="left:1084.5px;top:116.0px;" width="7.0" height="5.0" viewBox="0 0 7.0 5.0"><path d="M1 1.25 L3.5 3.75 L6.0 1.25" fill="none" stroke="#bbb" stroke-width="1.15"/></svg><svg class="b" style="left:1131px;top:71px;" width="26" height="26" viewBox="0 0 26 26"><rect x="1.8" y="1.8" width="22.6" height="22.6" rx="2" fill="#fcefea" stroke="#e4572e" stroke-width="1.6"/><rect x="4.6" y="4.6" width="7.5" height="7.4" fill="#fff" stroke="#e4572e" stroke-width="1.3"/><rect x="14.3" y="4.6" width="7.5" height="7.4" fill="#fff" stroke="#e4572e" stroke-width="1.3"/><rect x="4.6" y="14.2" width="7.5" height="7.4" fill="#fff" stroke="#e4572e" stroke-width="1.3"/><rect x="14.3" y="14.2" width="7.5" height="7.4" fill="#fff" stroke="#e4572e" stroke-width="1.3"/></svg><div class="t" style="left:1126.9px;top:99.8px;font-size:10px;line-height:14px;color:#262626;font-weight:normal;letter-spacing:0.266px;">Add-ins</div><svg class="b" style="left:1183px;top:71px;" width="26" height="26" viewBox="0 0 26 26"><rect x="1" y="1.5" width="23" height="23" fill="#fff" stroke="#555" stroke-width="1.2"/><rect x="1" y="1.5" width="23" height="3" fill="#666"/><path d="M1 9 H24 M1 14 H24 M1 19 H24 M8 4.5 V24.5 M16.5 4.5 V24.5" stroke="#b5b5b5" stroke-width="0.8"/><circle cx="11.6" cy="11.2" r="6.6" fill="#fff" stroke="#444" stroke-width="1.3"/><rect x="8.2" y="10" width="2.6" height="4" fill="#9a9a9a"/><rect x="11" y="7.8" width="2.3" height="6.2" fill="#555"/><rect x="13.3" y="8.8" width="2.4" height="5.2" fill="#2f86d8"/><line x1="16.5" y1="16" x2="23.5" y2="23.5" stroke="#444" stroke-width="1.4"/></svg><div class="t" style="left:1178px;top:99.8px;font-size:10px;line-height:14px;color:#262626;font-weight:normal;letter-spacing:-0.146px;">Analyse</div><div class="t" style="left:1184.8px;top:113.2px;font-size:10px;line-height:14px;color:#262626;font-weight:normal;letter-spacing:0.158px;">Data</div><div class="t" style="left:1195px;top:133.0px;font-size:10px;line-height:14px;color:#262626;font-weight:normal;letter-spacing:0px;"></div><svg class="b" style="left:1256px;top:132px;" width="10" height="8" viewBox="0 0 10 8"><path d="M1 2.0 L5 6.0 L9 2.0" fill="none" stroke="#444" stroke-width="1.15"/></svg><div class="b" style="left:7px;top:155px;width:158px;height:20px;background:#fff;border:1px solid #dcdcdc;border-radius:4px;box-sizing:border-box;"></div><div class="t" style="left:11.5px;top:157.5px;font-size:11px;line-height:15px;color:#333;font-weight:normal;letter-spacing:0px;">G9</div><svg class="b" style="left:152px;top:162.5px;" width="8" height="6" viewBox="0 0 8 6"><path d="M1 1.5 L4 4.5 L7 1.5" fill="none" stroke="#444" stroke-width="1.15"/></svg><div class="b" style="left:172px;top:160px;width:2px;height:2px;background:#444;"></div><div class="b" style="left:172px;top:164px;width:2px;height:2px;background:#444;"></div><div class="b" style="left:172px;top:168px;width:2px;height:2px;background:#444;"></div><div class="b" style="left:182px;top:155px;width:72px;height:20px;background:#fff;border:1px solid #dcdcdc;border-radius:4px;box-sizing:border-box;"></div><svg class="b" style="left:186px;top:158px;" width="14" height="14" viewBox="0 0 14 14"><path d="M2 2 L12 12 M12 2 L2 12" stroke="#b0b0b0" stroke-width="1"/></svg><svg class="b" style="left:205px;top:158px;" width="14" height="14" viewBox="0 0 14 14"><path d="M1 7 L5 11 L13 3" fill="none" stroke="#b0b0b0" stroke-width="1"/></svg><div class="t" style="left:227.5px;top:155.5px;font-size:14px;line-height:18px;color:#222;font-weight:bold;letter-spacing:0px;font-family:Liberation Serif;letter-spacing:-0.5px;"><i>fx</i></div><svg class="b" style="left:243px;top:162.5px;" width="8" height="6" viewBox="0 0 8 6"><path d="M1 1.5 L4 4.5 L7 1.5" fill="none" stroke="#999" stroke-width="1"/></svg><div class="b" style="left:257px;top:155px;width:1016px;height:52px;background:#fff;border:1px solid #dcdcdc;border-radius:4px;box-sizing:border-box;"></div><div class="t" style="left:265.5px;top:157.5px;font-size:11px;line-height:15px;color:#333;font-weight:normal;letter-spacing:-0.496px;">JT963852</div><svg class="b" style="left:1258px;top:158px;" width="12" height="10" viewBox="0 0 12 10"><path d="M2 7 L6 3 L10 7" fill="none" stroke="#444" stroke-width="1.1"/></svg><div class="b" style="left:0px;top:212px;width:1263px;height:16px;background:#f0f0f0;"></div><div class="t" style="left:-230.0px;width:600px;text-align:center;top:213.5px;font-size:11px;line-height:15px;color:#262626;font-weight:normal;letter-spacing:0px;-webkit-text-stroke:0.2px #262626;">C</div><div class="b" style="left:117px;top:212px;width:1px;height:15px;background:#d0d0d0;"></div><div class="t" style="left:-121.0px;width:600px;text-align:center;top:213.5px;font-size:11px;line-height:15px;color:#262626;font-weight:normal;letter-spacing:0px;-webkit-text-stroke:0.2px #262626;">D</div><div class="b" style="left:240px;top:212px;width:1px;height:15px;background:#d0d0d0;"></div><div class="t" style="left:-0.5px;width:600px;text-align:center;top:213.5px;font-size:11px;line-height:15px;color:#262626;font-weight:normal;letter-spacing:0px;-webkit-text-stroke:0.2px #262626;">E</div><div class="b" style="left:358px;top:212px;width:1px;height:15px;background:#d0d0d0;"></div><div class="t" style="left:106.0px;width:600px;text-align:center;top:213.5px;font-size:11px;line-height:15px;color:#262626;font-weight:normal;letter-spacing:0px;-webkit-text-stroke:0.2px #262626;">F</div><div class="b" style="left:453px;top:212px;width:1px;height:15px;background:#d0d0d0;"></div><div class="t" style="left:223.5px;width:600px;text-align:center;top:213.5px;font-size:11px;line-height:15px;color:#262626;font-weight:normal;letter-spacing:0px;-webkit-text-stroke:0.2px #262626;">G</div><div class="b" style="left:593px;top:212px;width:1px;height:15px;background:#d0d0d0;"></div><div class="t" style="left:344.0px;width:600px;text-align:center;top:213.5px;font-size:11px;line-height:15px;color:#262626;font-weight:normal;letter-spacing:0px;-webkit-text-stroke:0.2px #262626;">H</div><div class="b" style="left:694px;top:212px;width:1px;height:15px;background:#d0d0d0;"></div><div class="t" style="left:431.0px;width:600px;text-align:center;top:213.5px;font-size:11px;line-height:15px;color:#262626;font-weight:normal;letter-spacing:0px;-webkit-text-stroke:0.2px #262626;">I</div><div class="b" style="left:767px;top:212px;width:1px;height:15px;background:#d0d0d0;"></div><div class="t" style="left:513.5px;width:600px;text-align:center;top:213.5px;font-size:11px;line-height:15px;color:#262626;font-weight:normal;letter-spacing:0px;-webkit-text-stroke:0.2px #262626;">J</div><div class="b" style="left:859px;top:212px;width:1px;height:15px;background:#d0d0d0;"></div><div class="t" style="left:620.5px;width:600px;text-align:center;top:213.5px;font-size:11px;line-height:15px;color:#262626;font-weight:normal;letter-spacing:0px;-webkit-text-stroke:0.2px #262626;">K</div><div class="b" style="left:981px;top:212px;width:1px;height:15px;background:#d0d0d0;"></div><div class="t" style="left:731.5px;width:600px;text-align:center;top:213.5px;font-size:11px;line-height:15px;color:#262626;font-weight:normal;letter-spacing:0px;-webkit-text-stroke:0.2px #262626;">L</div><div class="b" style="left:1081px;top:212px;width:1px;height:15px;background:#d0d0d0;"></div><div class="t" style="left:825.0px;width:600px;text-align:center;top:213.5px;font-size:11px;line-height:15px;color:#262626;font-weight:normal;letter-spacing:0px;-webkit-text-stroke:0.2px #262626;">M</div><div class="b" style="left:1168px;top:212px;width:1px;height:15px;background:#d0d0d0;"></div><div class="t" style="left:916.8px;width:600px;text-align:center;top:213.5px;font-size:11px;line-height:15px;color:#262626;font-weight:normal;letter-spacing:0px;-webkit-text-stroke:0.2px #262626;">N</div><div class="b" style="left:0px;top:227px;width:1263px;height:1px;background:#c8c8c8;"></div><div class="b" style="left:22px;top:212px;width:1px;height:464px;background:#d0d0d0;"></div><svg class="b" style="left:8px;top:214px;" width="13" height="12" viewBox="0 0 13 12"><path d="M12 1 V11 H2 Z" fill="#b8b8b8"/></svg><div class="b" style="left:23px;top:228px;width:1240px;height:15px;background:#156082;"></div><div class="b" style="left:23px;top:243px;width:1240px;height:1px;background:#83cbeb;"></div><div class="t" style="left:-288.5px;width:600px;text-align:center;top:228.75px;font-size:11.5px;line-height:15.5px;color:#262626;font-weight:normal;letter-spacing:0px;-webkit-text-stroke:0.2px #262626;">1</div><div class="b" style="left:0px;top:243px;width:22px;height:1px;background:#d6d6d6;"></div><div class="t" style="left:24.8px;top:229.0px;font-size:11px;line-height:15px;color:#fff;font-weight:bold;letter-spacing:-0.36px;">Appraisee Title</div><div class="b" style="left:104px;top:229px;width:13px;height:13px;background:#f3f3f3;border:1px solid #d6d6d6;box-sizing:border-box;"></div><svg class="b" style="left:104px;top:229px;" width="13" height="13" viewBox="0 0 13 13"><path d="M3.5 5.5 L9.5 5.5 L6.5 8.5 Z" fill="#555"/></svg><div class="t" style="left:119.8px;top:229.0px;font-size:11px;line-height:15px;color:#fff;font-weight:bold;letter-spacing:-0.36px;">Appraisee Forename</div><div class="b" style="left:227px;top:229px;width:13px;height:13px;background:#f3f3f3;border:1px solid #d6d6d6;box-sizing:border-box;"></div><svg class="b" style="left:227px;top:229px;" width="13" height="13" viewBox="0 0 13 13"><path d="M3.5 5.5 L9.5 5.5 L6.5 8.5 Z" fill="#555"/></svg><div class="t" style="left:242.8px;top:229.0px;font-size:11px;line-height:15px;color:#fff;font-weight:bold;letter-spacing:-0.36px;">Appraisee Surname</div><div class="b" style="left:345px;top:229px;width:13px;height:13px;background:#f3f3f3;border:1px solid #d6d6d6;box-sizing:border-box;"></div><svg class="b" style="left:345px;top:229px;" width="13" height="13" viewBox="0 0 13 13"><path d="M3.5 5.5 L9.5 5.5 L6.5 8.5 Z" fill="#555"/></svg><div class="t" style="left:360.8px;top:229.0px;font-size:11px;line-height:15px;color:#fff;font-weight:bold;letter-spacing:-0.36px;">Appraisee Role</div><div class="b" style="left:440px;top:229px;width:13px;height:13px;background:#f3f3f3;border:1px solid #d6d6d6;box-sizing:border-box;"></div><svg class="b" style="left:440px;top:229px;" width="13" height="13" viewBox="0 0 13 13"><path d="M3.5 5.5 L9.5 5.5 L6.5 8.5 Z" fill="#555"/></svg><div class="t" style="left:455.8px;top:229.0px;font-size:11px;line-height:15px;color:#fff;font-weight:bold;letter-spacing:-0.36px;">Appraisee GMC Number</div><div class="b" style="left:580px;top:229px;width:13px;height:13px;background:#f3f3f3;border:1px solid #d6d6d6;box-sizing:border-box;"></div><svg class="b" style="left:580px;top:229px;" width="13" height="13" viewBox="0 0 13 13"><path d="M3.5 5.5 L9.5 5.5 L6.5 8.5 Z" fill="#555"/></svg><div class="t" style="left:595.8px;top:229.0px;font-size:11px;line-height:15px;color:#fff;font-weight:bold;letter-spacing:-0.36px;">Appraisee Email</div><div class="b" style="left:681px;top:229px;width:13px;height:13px;background:#f3f3f3;border:1px solid #d6d6d6;box-sizing:border-box;"></div><svg class="b" style="left:681px;top:229px;" width="13" height="13" viewBox="0 0 13 13"><path d="M3.5 5.5 L9.5 5.5 L6.5 8.5 Z" fill="#555"/></svg><div class="t" style="left:696.8px;top:229.0px;font-size:11px;line-height:15px;color:#fff;font-weight:bold;letter-spacing:-0.36px;">Fiscal Year</div><div class="b" style="left:754px;top:229px;width:13px;height:13px;background:#f3f3f3;border:1px solid #d6d6d6;box-sizing:border-box;"></div><svg class="b" style="left:754px;top:229px;" width="13" height="13" viewBox="0 0 13 13"><path d="M4.3 2.6 H11.6 L9 5.6 V8.6 H6.9 V5.6 Z" fill="#4a4a4a"/><path d="M2.2 7.6 H5.4 L3.8 9.6 Z" fill="#4a4a4a"/></svg><div class="t" style="left:769.8px;top:229.0px;font-size:11px;line-height:15px;color:#fff;font-weight:bold;letter-spacing:-0.36px;">Interview Date</div><div class="b" style="left:846px;top:229px;width:13px;height:13px;background:#f3f3f3;border:1px solid #d6d6d6;box-sizing:border-box;"></div><svg class="b" style="left:846px;top:229px;" width="13" height="13" viewBox="0 0 13 13"><path d="M3.5 5.5 L9.5 5.5 L6.5 8.5 Z" fill="#555"/></svg><div class="t" style="left:861.8px;top:229.0px;font-size:11px;line-height:15px;color:#fff;font-weight:bold;letter-spacing:-0.36px;">HealthBoard</div><div class="b" style="left:968px;top:229px;width:13px;height:13px;background:#f3f3f3;border:1px solid #d6d6d6;box-sizing:border-box;"></div><svg class="b" style="left:968px;top:229px;" width="13" height="13" viewBox="0 0 13 13"><path d="M3.5 5.5 L9.5 5.5 L6.5 8.5 Z" fill="#555"/></svg><div class="t" style="left:983.8px;top:229.0px;font-size:11px;line-height:15px;color:#fff;font-weight:bold;letter-spacing:-0.36px;">Interview Status</div><div class="b" style="left:1068px;top:229px;width:13px;height:13px;background:#f3f3f3;border:1px solid #d6d6d6;box-sizing:border-box;"></div><svg class="b" style="left:1068px;top:229px;" width="13" height="13" viewBox="0 0 13 13"><path d="M3.5 5.5 L9.5 5.5 L6.5 8.5 Z" fill="#555"/></svg><div class="t" style="left:1083.8px;top:229.0px;font-size:11px;line-height:15px;color:#fff;font-weight:bold;letter-spacing:-0.36px;">Form 4 Status</div><div class="b" style="left:1155px;top:229px;width:13px;height:13px;background:#f3f3f3;border:1px solid #d6d6d6;box-sizing:border-box;"></div><svg class="b" style="left:1155px;top:229px;" width="13" height="13" viewBox="0 0 13 13"><path d="M3.5 5.5 L9.5 5.5 L6.5 8.5 Z" fill="#555"/></svg><div class="t" style="left:1170.8px;top:229.0px;font-size:11px;line-height:15px;color:#fff;font-weight:bold;letter-spacing:-0.36px;">Form 5A Status</div><div class="b" style="left:1249px;top:229px;width:13px;height:13px;background:#f3f3f3;border:1px solid #d6d6d6;box-sizing:border-box;"></div><svg class="b" style="left:1249px;top:229px;" width="13" height="13" viewBox="0 0 13 13"><path d="M3.5 5.5 L9.5 5.5 L6.5 8.5 Z" fill="#555"/></svg><div class="b" style="left:23px;top:244px;width:1240px;height:15px;background:#c0e6f5;"></div><div class="b" style="left:23px;top:259px;width:1240px;height:1px;background:#83cbeb;"></div><div class="t" style="left:-288.5px;width:600px;text-align:center;top:244.75px;font-size:11.5px;line-height:15.5px;color:#3a30f0;font-weight:normal;letter-spacing:0px;-webkit-text-stroke:0.2px #3a30f0;">2</div><div class="b" style="left:0px;top:259px;width:22px;height:1px;background:#d6d6d6;"></div><div class="t" style="left:120px;top:245.0px;font-size:11px;line-height:15px;color:#1a1a1a;font-weight:normal;letter-spacing:-0.263px;-webkit-text-stroke:0.25px #1a1a1a;">Barry</div><div class="t" style="left:243px;top:245.0px;font-size:11px;line-height:15px;color:#1a1a1a;font-weight:normal;letter-spacing:-0.245px;-webkit-text-stroke:0.25px #1a1a1a;">Allen</div><div class="t" style="left:361px;top:245.0px;font-size:11px;line-height:15px;color:#1a1a1a;font-weight:normal;letter-spacing:-0.234px;-webkit-text-stroke:0.25px #1a1a1a;">Consultant</div><div class="t" style="left:456px;top:245.0px;font-size:11px;line-height:15px;color:#1a1a1a;font-weight:normal;letter-spacing:-0.31px;-webkit-text-stroke:0.25px #1a1a1a;">TEST084</div><div class="t" style="left:697px;top:245.0px;font-size:11px;line-height:15px;color:#1a1a1a;font-weight:normal;letter-spacing:-0.098px;-webkit-text-stroke:0.25px #1a1a1a;">2023/2024</div><div class="t" style="left:862px;top:245.0px;font-size:11px;line-height:15px;color:#1a1a1a;font-weight:normal;letter-spacing:-0.219px;-webkit-text-stroke:0.25px #1a1a1a;">Zone Testshire And Cute</div><div class="t" style="left:984px;top:245.0px;font-size:11px;line-height:15px;color:#1a1a1a;font-weight:normal;letter-spacing:-0.266px;-webkit-text-stroke:0.25px #1a1a1a;">Completed</div><div class="t" style="left:1084px;top:245.0px;font-size:11px;line-height:15px;color:#1a1a1a;font-weight:normal;letter-spacing:-0.266px;-webkit-text-stroke:0.25px #1a1a1a;">Completed</div><div class="t" style="right:422.5px;top:245.0px;font-size:11px;line-height:15px;color:#1a1a1a;font-weight:normal;letter-spacing:0px;-webkit-text-stroke:0.25px #1a1a1a;">04/06/2024 00:00</div><div class="b" style="left:23px;top:260px;width:1240px;height:15px;background:#fff;"></div><div class="b" style="left:23px;top:275px;width:1240px;height:1px;background:#83cbeb;"></div><div class="b" style="left:117px;top:260px;width:1px;height:15px;background:#e3e3e3;"></div><div class="b" style="left:240px;top:260px;width:1px;height:15px;background:#e3e3e3;"></div><div class="b" style="left:358px;top:260px;width:1px;height:15px;background:#e3e3e3;"></div><div class="b" style="left:453px;top:260px;width:1px;height:15px;background:#e3e3e3;"></div><div class="b" style="left:593px;top:260px;width:1px;height:15px;background:#e3e3e3;"></div><div class="b" style="left:694px;top:260px;width:1px;height:15px;background:#e3e3e3;"></div><div class="b" style="left:767px;top:260px;width:1px;height:15px;background:#e3e3e3;"></div><div class="b" style="left:859px;top:260px;width:1px;height:15px;background:#e3e3e3;"></div><div class="b" style="left:981px;top:260px;width:1px;height:15px;background:#e3e3e3;"></div><div class="b" style="left:1081px;top:260px;width:1px;height:15px;background:#e3e3e3;"></div><div class="b" style="left:1168px;top:260px;width:1px;height:15px;background:#e3e3e3;"></div><div class="t" style="left:-288.5px;width:600px;text-align:center;top:260.75px;font-size:11.5px;line-height:15.5px;color:#3a30f0;font-weight:normal;letter-spacing:0px;-webkit-text-stroke:0.2px #3a30f0;">3</div><div class="b" style="left:0px;top:275px;width:22px;height:1px;background:#d6d6d6;"></div><div class="t" style="left:25px;top:261.0px;font-size:11px;line-height:15px;color:#1a1a1a;font-weight:normal;letter-spacing:-0.464px;-webkit-text-stroke:0.25px #1a1a1a;">Dr</div><div class="t" style="left:120px;top:261.0px;font-size:11px;line-height:15px;color:#1a1a1a;font-weight:normal;letter-spacing:-0.416px;-webkit-text-stroke:0.25px #1a1a1a;">Tom</div><div class="t" style="left:243px;top:261.0px;font-size:11px;line-height:15px;color:#1a1a1a;font-weight:normal;letter-spacing:-0.288px;-webkit-text-stroke:0.25px #1a1a1a;">Baker</div><div class="t" style="left:456px;top:261.0px;font-size:11px;line-height:15px;color:#1a1a1a;font-weight:normal;letter-spacing:-0.324px;-webkit-text-stroke:0.25px #1a1a1a;">TB123</div><div class="t" style="left:697px;top:261.0px;font-size:11px;line-height:15px;color:#1a1a1a;font-weight:normal;letter-spacing:-0.098px;-webkit-text-stroke:0.25px #1a1a1a;">2023/2024</div><div class="t" style="left:862px;top:261.0px;font-size:11px;line-height:15px;color:#1a1a1a;font-weight:normal;letter-spacing:-0.219px;-webkit-text-stroke:0.25px #1a1a1a;">Zone Testshire And Cute</div><div class="t" style="left:984px;top:261.0px;font-size:11px;line-height:15px;color:#1a1a1a;font-weight:normal;letter-spacing:-0.266px;-webkit-text-stroke:0.25px #1a1a1a;">Completed</div><div class="t" style="left:1084px;top:261.0px;font-size:11px;line-height:15px;color:#1a1a1a;font-weight:normal;letter-spacing:-0.266px;-webkit-text-stroke:0.25px #1a1a1a;">Completed</div><div class="t" style="right:422.5px;top:261.0px;font-size:11px;line-height:15px;color:#1a1a1a;font-weight:normal;letter-spacing:0px;-webkit-text-stroke:0.25px #1a1a1a;">12/02/2024 00:00</div><div class="b" style="left:23px;top:276px;width:1240px;height:15px;background:#c0e6f5;"></div><div class="b" style="left:23px;top:291px;width:1240px;height:1px;background:#83cbeb;"></div><div class="t" style="left:-288.5px;width:600px;text-align:center;top:276.75px;font-size:11.5px;line-height:15.5px;color:#3a30f0;font-weight:normal;letter-spacing:0px;-webkit-text-stroke:0.2px #3a30f0;">4</div><div class="b" style="left:0px;top:291px;width:22px;height:1px;background:#d6d6d6;"></div><div class="t" style="left:25px;top:277.0px;font-size:11px;line-height:15px;color:#1a1a1a;font-weight:normal;letter-spacing:-0.464px;-webkit-text-stroke:0.25px #1a1a1a;">Dr</div><div class="t" style="left:120px;top:277.0px;font-size:11px;line-height:15px;color:#1a1a1a;font-weight:normal;letter-spacing:-0.261px;-webkit-text-stroke:0.25px #1a1a1a;">Hieronymus</div><div class="t" style="left:243px;top:277.0px;font-size:11px;line-height:15px;color:#1a1a1a;font-weight:normal;letter-spacing:-0.306px;-webkit-text-stroke:0.25px #1a1a1a;">Bosch</div><div class="t" style="left:361px;top:277.0px;font-size:11px;line-height:15px;color:#1a1a1a;font-weight:normal;letter-spacing:-0.234px;-webkit-text-stroke:0.25px #1a1a1a;">Consultant</div><div class="t" style="left:456px;top:277.0px;font-size:11px;line-height:15px;color:#1a1a1a;font-weight:normal;letter-spacing:-0.294px;-webkit-text-stroke:0.25px #1a1a1a;">hb1234</div><div class="t" style="left:697px;top:277.0px;font-size:11px;line-height:15px;color:#1a1a1a;font-weight:normal;letter-spacing:-0.098px;-webkit-text-stroke:0.25px #1a1a1a;">2023/2024</div><div class="t" style="left:862px;top:277.0px;font-size:11px;line-height:15px;color:#1a1a1a;font-weight:normal;letter-spacing:-0.219px;-webkit-text-stroke:0.25px #1a1a1a;">Zone Testshire And Cute</div><div class="t" style="left:984px;top:277.0px;font-size:11px;line-height:15px;color:#1a1a1a;font-weight:normal;letter-spacing:-0.266px;-webkit-text-stroke:0.25px #1a1a1a;">Completed</div><div class="t" style="left:1084px;top:277.0px;font-size:11px;line-height:15px;color:#1a1a1a;font-weight:normal;letter-spacing:-0.266px;-webkit-text-stroke:0.25px #1a1a1a;">Completed</div><div class="t" style="right:422.5px;top:277.0px;font-size:11px;line-height:15px;color:#1a1a1a;font-weight:normal;letter-spacing:0px;-webkit-text-stroke:0.25px #1a1a1a;">05/12/2023 00:00</div><div class="b" style="left:23px;top:292px;width:1240px;height:15px;background:#fff;"></div><div class="b" style="left:23px;top:307px;width:1240px;height:1px;background:#83cbeb;"></div><div class="b" style="left:117px;top:292px;width:1px;height:15px;background:#e3e3e3;"></div><div class="b" style="left:240px;top:292px;width:1px;height:15px;background:#e3e3e3;"></div><div class="b" style="left:358px;top:292px;width:1px;height:15px;background:#e3e3e3;"></div><div class="b" style="left:453px;top:292px;width:1px;height:15px;background:#e3e3e3;"></div><div class="b" style="left:593px;top:292px;width:1px;height:15px;background:#e3e3e3;"></div><div class="b" style="left:694px;top:292px;width:1px;height:15px;background:#e3e3e3;"></div><div class="b" style="left:767px;top:292px;width:1px;height:15px;background:#e3e3e3;"></div><div class="b" style="left:859px;top:292px;width:1px;height:15px;background:#e3e3e3;"></div><div class="b" style="left:981px;top:292px;width:1px;height:15px;background:#e3e3e3;"></div><div class="b" style="left:1081px;top:292px;width:1px;height:15px;background:#e3e3e3;"></div><div class="b" style="left:1168px;top:292px;width:1px;height:15px;background:#e3e3e3;"></div><div class="t" style="left:-288.5px;width:600px;text-align:center;top:292.75px;font-size:11.5px;line-height:15.5px;color:#3a30f0;font-weight:normal;letter-spacing:0px;-webkit-text-stroke:0.2px #3a30f0;">5</div><div class="b" style="left:0px;top:307px;width:22px;height:1px;background:#d6d6d6;"></div><div class="t" style="left:120px;top:293.0px;font-size:11px;line-height:15px;color:#1a1a1a;font-weight:normal;letter-spacing:-0.354px;-webkit-text-stroke:0.25px #1a1a1a;">Tommy</div><div class="t" style="left:243px;top:293.0px;font-size:11px;line-height:15px;color:#1a1a1a;font-weight:normal;letter-spacing:-0.289px;-webkit-text-stroke:0.25px #1a1a1a;">Cooper</div><div class="t" style="left:361px;top:293.0px;font-size:11px;line-height:15px;color:#1a1a1a;font-weight:normal;letter-spacing:-0.234px;-webkit-text-stroke:0.25px #1a1a1a;">Consultant</div><div class="t" style="left:456px;top:293.0px;font-size:11px;line-height:15px;color:#1a1a1a;font-weight:normal;letter-spacing:-0.302px;-webkit-text-stroke:0.25px #1a1a1a;">TC34567</div><div class="t" style="left:697px;top:293.0px;font-size:11px;line-height:15px;color:#1a1a1a;font-weight:normal;letter-spacing:-0.098px;-webkit-text-stroke:0.25px #1a1a1a;">2023/2024</div><div class="t" style="left:862px;top:293.0px;font-size:11px;line-height:15px;color:#1a1a1a;font-weight:normal;letter-spacing:-0.219px;-webkit-text-stroke:0.25px #1a1a1a;">Zone Testshire And Cute</div><div class="t" style="left:984px;top:293.0px;font-size:11px;line-height:15px;color:#1a1a1a;font-weight:normal;letter-spacing:-0.266px;-webkit-text-stroke:0.25px #1a1a1a;">Completed</div><div class="t" style="left:1084px;top:293.0px;font-size:11px;line-height:15px;color:#1a1a1a;font-weight:normal;letter-spacing:-0.266px;-webkit-text-stroke:0.25px #1a1a1a;">Completed</div><div class="t" style="right:422.5px;top:293.0px;font-size:11px;line-height:15px;color:#1a1a1a;font-weight:normal;letter-spacing:0px;-webkit-text-stroke:0.25px #1a1a1a;">01/12/2023 00:00</div><div class="b" style="left:23px;top:308px;width:1240px;height:15px;background:#c0e6f5;"></div><div class="b" style="left:23px;top:323px;width:1240px;height:1px;background:#83cbeb;"></div><div class="t" style="left:-288.5px;width:600px;text-align:center;top:308.75px;font-size:11.5px;line-height:15.5px;color:#3a30f0;font-weight:normal;letter-spacing:0px;-webkit-text-stroke:0.2px #3a30f0;">6</div><div class="b" style="left:0px;top:323px;width:22px;height:1px;background:#d6d6d6;"></div><div class="t" style="left:120px;top:309.0px;font-size:11px;line-height:15px;color:#1a1a1a;font-weight:normal;letter-spacing:-0.263px;-webkit-text-stroke:0.25px #1a1a1a;">Carol</div><div class="t" style="left:243px;top:309.0px;font-size:11px;line-height:15px;color:#1a1a1a;font-weight:normal;letter-spacing:-0.273px;-webkit-text-stroke:0.25px #1a1a1a;">Danvers</div><div class="t" style="left:361px;top:309.0px;font-size:11px;line-height:15px;color:#1a1a1a;font-weight:normal;letter-spacing:-0.234px;-webkit-text-stroke:0.25px #1a1a1a;">Consultant</div><div class="t" style="left:456px;top:309.0px;font-size:11px;line-height:15px;color:#1a1a1a;font-weight:normal;letter-spacing:-0.322px;-webkit-text-stroke:0.25px #1a1a1a;">GUEST014</div><div class="t" style="left:697px;top:309.0px;font-size:11px;line-height:15px;color:#1a1a1a;font-weight:normal;letter-spacing:-0.098px;-webkit-text-stroke:0.25px #1a1a1a;">2023/2024</div><div class="t" style="left:862px;top:309.0px;font-size:11px;line-height:15px;color:#1a1a1a;font-weight:normal;letter-spacing:-0.219px;-webkit-text-stroke:0.25px #1a1a1a;">Zone Testshire And Cute</div><div class="t" style="left:984px;top:309.0px;font-size:11px;line-height:15px;color:#1a1a1a;font-weight:normal;letter-spacing:-0.266px;-webkit-text-stroke:0.25px #1a1a1a;">Completed</div><div class="t" style="left:1084px;top:309.0px;font-size:11px;line-height:15px;color:#1a1a1a;font-weight:normal;letter-spacing:-0.25px;-webkit-text-stroke:0.25px #1a1a1a;">Not_Created</div><div class="t" style="right:422.5px;top:309.0px;font-size:11px;line-height:15px;color:#1a1a1a;font-weight:normal;letter-spacing:0px;-webkit-text-stroke:0.25px #1a1a1a;">27/06/2024 00:00</div><div class="b" style="left:23px;top:324px;width:1240px;height:15px;background:#fff;"></div><div class="b" style="left:23px;top:339px;width:1240px;height:1px;background:#83cbeb;"></div><div class="b" style="left:117px;top:324px;width:1px;height:15px;background:#e3e3e3;"></div><div class="b" style="left:240px;top:324px;width:1px;height:15px;background:#e3e3e3;"></div><div class="b" style="left:358px;top:324px;width:1px;height:15px;background:#e3e3e3;"></div><div class="b" style="left:453px;top:324px;width:1px;height:15px;background:#e3e3e3;"></div><div class="b" style="left:593px;top:324px;width:1px;height:15px;background:#e3e3e3;"></div><div class="b" style="left:694px;top:324px;width:1px;height:15px;background:#e3e3e3;"></div><div class="b" style="left:767px;top:324px;width:1px;height:15px;background:#e3e3e3;"></div><div class="b" style="left:859px;top:324px;width:1px;height:15px;background:#e3e3e3;"></div><div class="b" style="left:981px;top:324px;width:1px;height:15px;background:#e3e3e3;"></div><div class="b" style="left:1081px;top:324px;width:1px;height:15px;background:#e3e3e3;"></div><div class="b" style="left:1168px;top:324px;width:1px;height:15px;background:#e3e3e3;"></div><div class="t" style="left:-288.5px;width:600px;text-align:center;top:324.75px;font-size:11.5px;line-height:15.5px;color:#3a30f0;font-weight:normal;letter-spacing:0px;-webkit-text-stroke:0.2px #3a30f0;">7</div><div class="b" style="left:0px;top:339px;width:22px;height:1px;background:#d6d6d6;"></div><div class="t" style="left:120px;top:325.0px;font-size:11px;line-height:15px;color:#1a1a1a;font-weight:normal;letter-spacing:-0.318px;-webkit-text-stroke:0.25px #1a1a1a;">Jane</div><div class="t" style="left:243px;top:325.0px;font-size:11px;line-height:15px;color:#1a1a1a;font-weight:normal;letter-spacing:-0.404px;-webkit-text-stroke:0.25px #1a1a1a;">Doe</div><div class="t" style="left:361px;top:325.0px;font-size:11px;line-height:15px;color:#1a1a1a;font-weight:normal;letter-spacing:-0.234px;-webkit-text-stroke:0.25px #1a1a1a;">Consultant</div><div class="t" style="left:456px;top:325.0px;font-size:11px;line-height:15px;color:#1a1a1a;font-weight:normal;letter-spacing:-0.31px;-webkit-text-stroke:0.25px #1a1a1a;">TEST080</div><div class="t" style="left:697px;top:325.0px;font-size:11px;line-height:15px;color:#1a1a1a;font-weight:normal;letter-spacing:-0.098px;-webkit-text-stroke:0.25px #1a1a1a;">2023/2024</div><div class="t" style="left:862px;top:325.0px;font-size:11px;line-height:15px;color:#1a1a1a;font-weight:normal;letter-spacing:-0.219px;-webkit-text-stroke:0.25px #1a1a1a;">Zone Testshire And Cute</div><div class="t" style="left:984px;top:325.0px;font-size:11px;line-height:15px;color:#1a1a1a;font-weight:normal;letter-spacing:-0.266px;-webkit-text-stroke:0.25px #1a1a1a;">Completed</div><div class="t" style="left:1084px;top:325.0px;font-size:11px;line-height:15px;color:#1a1a1a;font-weight:normal;letter-spacing:-0.266px;-webkit-text-stroke:0.25px #1a1a1a;">Completed</div><div class="t" style="right:422.5px;top:325.0px;font-size:11px;line-height:15px;color:#1a1a1a;font-weight:normal;letter-spacing:0px;-webkit-text-stroke:0.25px #1a1a1a;">26/02/2024 00:00</div><div class="b" style="left:23px;top:340px;width:1240px;height:15px;background:#c0e6f5;"></div><div class="b" style="left:23px;top:355px;width:1240px;height:1px;background:#83cbeb;"></div><div class="t" style="left:-288.5px;width:600px;text-align:center;top:340.75px;font-size:11.5px;line-height:15.5px;color:#3a30f0;font-weight:normal;letter-spacing:0px;-webkit-text-stroke:0.2px #3a30f0;">8</div><div class="b" style="left:0px;top:355px;width:22px;height:1px;background:#d6d6d6;"></div><div class="t" style="left:25px;top:341.0px;font-size:11px;line-height:15px;color:#1a1a1a;font-weight:normal;letter-spacing:-0.464px;-webkit-text-stroke:0.25px #1a1a1a;">Dr</div><div class="t" style="left:120px;top:341.0px;font-size:11px;line-height:15px;color:#1a1a1a;font-weight:normal;letter-spacing:-0.288px;-webkit-text-stroke:0.25px #1a1a1a;">Bruce</div><div class="t" style="left:243px;top:341.0px;font-size:11px;line-height:15px;color:#1a1a1a;font-weight:normal;letter-spacing:-0.284px;-webkit-text-stroke:0.25px #1a1a1a;">Banner</div><div class="t" style="left:361px;top:341.0px;font-size:11px;line-height:15px;color:#1a1a1a;font-weight:normal;letter-spacing:-0.234px;-webkit-text-stroke:0.25px #1a1a1a;">Consultant</div><div class="t" style="left:456px;top:341.0px;font-size:11px;line-height:15px;color:#1a1a1a;font-weight:normal;letter-spacing:-0.31px;-webkit-text-stroke:0.25px #1a1a1a;">CD12345</div><div class="t" style="left:697px;top:341.0px;font-size:11px;line-height:15px;color:#1a1a1a;font-weight:normal;letter-spacing:-0.098px;-webkit-text-stroke:0.25px #1a1a1a;">2023/2024</div><div class="t" style="left:862px;top:341.0px;font-size:11px;line-height:15px;color:#1a1a1a;font-weight:normal;letter-spacing:-0.219px;-webkit-text-stroke:0.25px #1a1a1a;">Zone Testshire And Cute</div><div class="t" style="left:984px;top:341.0px;font-size:11px;line-height:15px;color:#1a1a1a;font-weight:normal;letter-spacing:-0.266px;-webkit-text-stroke:0.25px #1a1a1a;">Completed</div><div class="t" style="left:1084px;top:341.0px;font-size:11px;line-height:15px;color:#1a1a1a;font-weight:normal;letter-spacing:-0.266px;-webkit-text-stroke:0.25px #1a1a1a;">Completed</div><div class="t" style="right:422.5px;top:341.0px;font-size:11px;line-height:15px;color:#1a1a1a;font-weight:normal;letter-spacing:0px;-webkit-text-stroke:0.25px #1a1a1a;">15/10/2024 00:00</div><div class="b" style="left:23px;top:356px;width:1240px;height:15px;background:#fff;"></div><div class="b" style="left:23px;top:371px;width:1240px;height:1px;background:#83cbeb;"></div><div class="b" style="left:117px;top:356px;width:1px;height:15px;background:#e3e3e3;"></div><div class="b" style="left:240px;top:356px;width:1px;height:15px;background:#e3e3e3;"></div><div class="b" style="left:358px;top:356px;width:1px;height:15px;background:#e3e3e3;"></div><div class="b" style="left:453px;top:356px;width:1px;height:15px;background:#e3e3e3;"></div><div class="b" style="left:593px;top:356px;width:1px;height:15px;background:#e3e3e3;"></div><div class="b" style="left:694px;top:356px;width:1px;height:15px;background:#e3e3e3;"></div><div class="b" style="left:767px;top:356px;width:1px;height:15px;background:#e3e3e3;"></div><div class="b" style="left:859px;top:356px;width:1px;height:15px;background:#e3e3e3;"></div><div class="b" style="left:981px;top:356px;width:1px;height:15px;background:#e3e3e3;"></div><div class="b" style="left:1081px;top:356px;width:1px;height:15px;background:#e3e3e3;"></div><div class="b" style="left:1168px;top:356px;width:1px;height:15px;background:#e3e3e3;"></div><div class="t" style="left:-288.5px;width:600px;text-align:center;top:356.75px;font-size:11.5px;line-height:15.5px;color:#3a30f0;font-weight:normal;letter-spacing:0px;-webkit-text-stroke:0.2px #3a30f0;">9</div><div class="b" style="left:0px;top:371px;width:22px;height:1px;background:#d6d6d6;"></div><div class="t" style="left:25px;top:357.0px;font-size:11px;line-height:15px;color:#1a1a1a;font-weight:normal;letter-spacing:-0.464px;-webkit-text-stroke:0.25px #1a1a1a;">Dr</div><div class="t" style="left:120px;top:357.0px;font-size:11px;line-height:15px;color:#1a1a1a;font-weight:normal;letter-spacing:-0.318px;-webkit-text-stroke:0.25px #1a1a1a;">John</div><div class="t" style="left:243px;top:357.0px;font-size:11px;line-height:15px;color:#1a1a1a;font-weight:normal;letter-spacing:-0.24px;-webkit-text-stroke:0.25px #1a1a1a;">Tester</div><div class="t" style="left:361px;top:357.0px;font-size:11px;line-height:15px;color:#1a1a1a;font-weight:normal;letter-spacing:-0.234px;-webkit-text-stroke:0.25px #1a1a1a;">Consultant</div><div class="t" style="left:456px;top:357.0px;font-size:11px;line-height:15px;color:#1a1a1a;font-weight:normal;letter-spacing:-0.28px;-webkit-text-stroke:0.25px #1a1a1a;">JT963852</div><div class="t" style="left:697px;top:357.0px;font-size:11px;line-height:15px;color:#1a1a1a;font-weight:normal;letter-spacing:-0.098px;-webkit-text-stroke:0.25px #1a1a1a;">2023/2024</div><div class="t" style="left:862px;top:357.0px;font-size:11px;line-height:15px;color:#1a1a1a;font-weight:normal;letter-spacing:-0.219px;-webkit-text-stroke:0.25px #1a1a1a;">Zone Testshire And Cute</div><div class="t" style="left:984px;top:357.0px;font-size:11px;line-height:15px;color:#1a1a1a;font-weight:normal;letter-spacing:-0.266px;-webkit-text-stroke:0.25px #1a1a1a;">Completed</div><div class="t" style="left:1084px;top:357.0px;font-size:11px;line-height:15px;color:#1a1a1a;font-weight:normal;letter-spacing:-0.266px;-webkit-text-stroke:0.25px #1a1a1a;">Completed</div><div class="t" style="right:422.5px;top:357.0px;font-size:11px;line-height:15px;color:#1a1a1a;font-weight:normal;letter-spacing:0px;-webkit-text-stroke:0.25px #1a1a1a;">10/10/2023 00:00</div><div class="b" style="left:23px;top:372px;width:1240px;height:15px;background:#c0e6f5;"></div><div class="b" style="left:23px;top:387px;width:1240px;height:1px;background:#83cbeb;"></div><div class="t" style="left:-288.5px;width:600px;text-align:center;top:372.75px;font-size:11.5px;line-height:15.5px;color:#3a30f0;font-weight:normal;letter-spacing:0px;-webkit-text-stroke:0.2px #3a30f0;">10</div><div class="b" style="left:0px;top:387px;width:22px;height:1px;background:#d6d6d6;"></div><div class="t" style="left:120px;top:373.0px;font-size:11px;line-height:15px;color:#1a1a1a;font-weight:normal;letter-spacing:-0.269px;-webkit-text-stroke:0.25px #1a1a1a;">Test</div><div class="t" style="left:243px;top:373.0px;font-size:11px;line-height:15px;color:#1a1a1a;font-weight:normal;letter-spacing:-0.31px;-webkit-text-stroke:0.25px #1a1a1a;">User</div><div class="t" style="left:361px;top:373.0px;font-size:11px;line-height:15px;color:#1a1a1a;font-weight:normal;letter-spacing:-0.234px;-webkit-text-stroke:0.25px #1a1a1a;">Consultant</div><div class="t" style="left:456px;top:373.0px;font-size:11px;line-height:15px;color:#1a1a1a;font-weight:normal;letter-spacing:-0.31px;-webkit-text-stroke:0.25px #1a1a1a;">TEST108</div><div class="t" style="left:697px;top:373.0px;font-size:11px;line-height:15px;color:#1a1a1a;font-weight:normal;letter-spacing:-0.098px;-webkit-text-stroke:0.25px #1a1a1a;">2023/2024</div><div class="t" style="left:862px;top:373.0px;font-size:11px;line-height:15px;color:#1a1a1a;font-weight:normal;letter-spacing:-0.241px;-webkit-text-stroke:0.25px #1a1a1a;">Zone Test</div><div class="t" style="left:984px;top:373.0px;font-size:11px;line-height:15px;color:#1a1a1a;font-weight:normal;letter-spacing:-0.266px;-webkit-text-stroke:0.25px #1a1a1a;">Completed</div><div class="t" style="left:1084px;top:373.0px;font-size:11px;line-height:15px;color:#1a1a1a;font-weight:normal;letter-spacing:-0.266px;-webkit-text-stroke:0.25px #1a1a1a;">Completed</div><div class="t" style="right:422.5px;top:373.0px;font-size:11px;line-height:15px;color:#1a1a1a;font-weight:normal;letter-spacing:0px;-webkit-text-stroke:0.25px #1a1a1a;">14/05/2024 00:00</div><div class="b" style="left:23px;top:388px;width:1240px;height:15px;background:#fff;"></div><div class="b" style="left:23px;top:403px;width:1240px;height:1px;background:#83cbeb;"></div><div class="b" style="left:117px;top:388px;width:1px;height:15px;background:#e3e3e3;"></div><div class="b" style="left:240px;top:388px;width:1px;height:15px;background:#e3e3e3;"></div><div class="b" style="left:358px;top:388px;width:1px;height:15px;background:#e3e3e3;"></div><div class="b" style="left:453px;top:388px;width:1px;height:15px;background:#e3e3e3;"></div><div class="b" style="left:593px;top:388px;width:1px;height:15px;background:#e3e3e3;"></div><div class="b" style="left:694px;top:388px;width:1px;height:15px;background:#e3e3e3;"></div><div class="b" style="left:767px;top:388px;width:1px;height:15px;background:#e3e3e3;"></div><div class="b" style="left:859px;top:388px;width:1px;height:15px;background:#e3e3e3;"></div><div class="b" style="left:981px;top:388px;width:1px;height:15px;background:#e3e3e3;"></div><div class="b" style="left:1081px;top:388px;width:1px;height:15px;background:#e3e3e3;"></div><div class="b" style="left:1168px;top:388px;width:1px;height:15px;background:#e3e3e3;"></div><div class="t" style="left:-288.5px;width:600px;text-align:center;top:388.75px;font-size:11.5px;line-height:15.5px;color:#3a30f0;font-weight:normal;letter-spacing:0px;-webkit-text-stroke:0.2px #3a30f0;">11</div><div class="b" style="left:0px;top:403px;width:22px;height:1px;background:#d6d6d6;"></div><div class="t" style="left:120px;top:389.0px;font-size:11px;line-height:15px;color:#1a1a1a;font-weight:normal;letter-spacing:-0.223px;-webkit-text-stroke:0.25px #1a1a1a;">Victor</div><div class="t" style="left:243px;top:389.0px;font-size:11px;line-height:15px;color:#1a1a1a;font-weight:normal;letter-spacing:-0.306px;-webkit-text-stroke:0.25px #1a1a1a;">Green</div><div class="t" style="left:361px;top:389.0px;font-size:11px;line-height:15px;color:#1a1a1a;font-weight:normal;letter-spacing:-0.234px;-webkit-text-stroke:0.25px #1a1a1a;">Consultant</div><div class="t" style="left:456px;top:389.0px;font-size:11px;line-height:15px;color:#1a1a1a;font-weight:normal;letter-spacing:-0.31px;-webkit-text-stroke:0.25px #1a1a1a;">VG56789</div><div class="t" style="left:697px;top:389.0px;font-size:11px;line-height:15px;color:#1a1a1a;font-weight:normal;letter-spacing:-0.098px;-webkit-text-stroke:0.25px #1a1a1a;">2023/2024</div><div class="t" style="left:862px;top:389.0px;font-size:11px;line-height:15px;color:#1a1a1a;font-weight:normal;letter-spacing:-0.219px;-webkit-text-stroke:0.25px #1a1a1a;">Zone Testshire And Cute</div><div class="t" style="left:984px;top:389.0px;font-size:11px;line-height:15px;color:#1a1a1a;font-weight:normal;letter-spacing:-0.266px;-webkit-text-stroke:0.25px #1a1a1a;">Completed</div><div class="t" style="left:1084px;top:389.0px;font-size:11px;line-height:15px;color:#1a1a1a;font-weight:normal;letter-spacing:-0.266px;-webkit-text-stroke:0.25px #1a1a1a;">Completed</div><div class="t" style="right:422.5px;top:389.0px;font-size:11px;line-height:15px;color:#1a1a1a;font-weight:normal;letter-spacing:0px;-webkit-text-stroke:0.25px #1a1a1a;">01/02/2024 00:00</div><div class="b" style="left:23px;top:404px;width:1240px;height:15px;background:#c0e6f5;"></div><div class="b" style="left:23px;top:419px;width:1240px;height:1px;background:#83cbeb;"></div><div class="t" style="left:-288.5px;width:600px;text-align:center;top:404.75px;font-size:11.5px;line-height:15.5px;color:#3a30f0;font-weight:normal;letter-spacing:0px;-webkit-text-stroke:0.2px #3a30f0;">12</div><div class="b" style="left:0px;top:419px;width:22px;height:1px;background:#d6d6d6;"></div><div class="t" style="left:120px;top:405.0px;font-size:11px;line-height:15px;color:#1a1a1a;font-weight:normal;letter-spacing:-0.305px;-webkit-text-stroke:0.25px #1a1a1a;">Wilma</div><div class="t" style="left:243px;top:405.0px;font-size:11px;line-height:15px;color:#1a1a1a;font-weight:normal;letter-spacing:-0.303px;-webkit-text-stroke:0.25px #1a1a1a;">Heaney</div><div class="t" style="left:361px;top:405.0px;font-size:11px;line-height:15px;color:#1a1a1a;font-weight:normal;letter-spacing:-0.234px;-webkit-text-stroke:0.25px #1a1a1a;">Consultant</div><div class="t" style="left:456px;top:405.0px;font-size:11px;line-height:15px;color:#1a1a1a;font-weight:normal;letter-spacing:-0.322px;-webkit-text-stroke:0.25px #1a1a1a;">GUEST874</div><div class="t" style="left:697px;top:405.0px;font-size:11px;line-height:15px;color:#1a1a1a;font-weight:normal;letter-spacing:-0.098px;-webkit-text-stroke:0.25px #1a1a1a;">2023/2024</div><div class="t" style="left:862px;top:405.0px;font-size:11px;line-height:15px;color:#1a1a1a;font-weight:normal;letter-spacing:-0.219px;-webkit-text-stroke:0.25px #1a1a1a;">Zone Testshire And Cute</div><div class="t" style="left:984px;top:405.0px;font-size:11px;line-height:15px;color:#1a1a1a;font-weight:normal;letter-spacing:-0.266px;-webkit-text-stroke:0.25px #1a1a1a;">Completed</div><div class="t" style="left:1084px;top:405.0px;font-size:11px;line-height:15px;color:#1a1a1a;font-weight:normal;letter-spacing:-0.266px;-webkit-text-stroke:0.25px #1a1a1a;">Completed</div><div class="t" style="right:422.5px;top:405.0px;font-size:11px;line-height:15px;color:#1a1a1a;font-weight:normal;letter-spacing:0px;-webkit-text-stroke:0.25px #1a1a1a;">30/04/2024 00:00</div><div class="b" style="left:23px;top:420px;width:1240px;height:15px;background:#fff;"></div><div class="b" style="left:23px;top:435px;width:1240px;height:1px;background:#83cbeb;"></div><div class="b" style="left:117px;top:420px;width:1px;height:15px;background:#e3e3e3;"></div><div class="b" style="left:240px;top:420px;width:1px;height:15px;background:#e3e3e3;"></div><div class="b" style="left:358px;top:420px;width:1px;height:15px;background:#e3e3e3;"></div><div class="b" style="left:453px;top:420px;width:1px;height:15px;background:#e3e3e3;"></div><div class="b" style="left:593px;top:420px;width:1px;height:15px;background:#e3e3e3;"></div><div class="b" style="left:694px;top:420px;width:1px;height:15px;background:#e3e3e3;"></div><div class="b" style="left:767px;top:420px;width:1px;height:15px;background:#e3e3e3;"></div><div class="b" style="left:859px;top:420px;width:1px;height:15px;background:#e3e3e3;"></div><div class="b" style="left:981px;top:420px;width:1px;height:15px;background:#e3e3e3;"></div><div class="b" style="left:1081px;top:420px;width:1px;height:15px;background:#e3e3e3;"></div><div class="b" style="left:1168px;top:420px;width:1px;height:15px;background:#e3e3e3;"></div><div class="t" style="left:-288.5px;width:600px;text-align:center;top:420.75px;font-size:11.5px;line-height:15.5px;color:#3a30f0;font-weight:normal;letter-spacing:0px;-webkit-text-stroke:0.2px #3a30f0;">13</div><div class="b" style="left:0px;top:435px;width:22px;height:1px;background:#d6d6d6;"></div><div class="t" style="left:25px;top:421.0px;font-size:11px;line-height:15px;color:#1a1a1a;font-weight:normal;letter-spacing:-0.464px;-webkit-text-stroke:0.25px #1a1a1a;">Dr</div><div class="t" style="left:120px;top:421.0px;font-size:11px;line-height:15px;color:#1a1a1a;font-weight:normal;letter-spacing:-0.245px;-webkit-text-stroke:0.25px #1a1a1a;">Sherlock</div><div class="t" style="left:243px;top:421.0px;font-size:11px;line-height:15px;color:#1a1a1a;font-weight:normal;letter-spacing:-0.298px;-webkit-text-stroke:0.25px #1a1a1a;">Holmes</div><div class="t" style="left:361px;top:421.0px;font-size:11px;line-height:15px;color:#1a1a1a;font-weight:normal;letter-spacing:-0.234px;-webkit-text-stroke:0.25px #1a1a1a;">Consultant</div><div class="t" style="left:456px;top:421.0px;font-size:11px;line-height:15px;color:#1a1a1a;font-weight:normal;letter-spacing:-0.273px;-webkit-text-stroke:0.25px #1a1a1a;">sholmes</div><div class="t" style="left:697px;top:421.0px;font-size:11px;line-height:15px;color:#1a1a1a;font-weight:normal;letter-spacing:-0.098px;-webkit-text-stroke:0.25px #1a1a1a;">2023/2024</div><div class="t" style="left:862px;top:421.0px;font-size:11px;line-height:15px;color:#1a1a1a;font-weight:normal;letter-spacing:-0.219px;-webkit-text-stroke:0.25px #1a1a1a;">Zone Testshire And Cute</div><div class="t" style="left:984px;top:421.0px;font-size:11px;line-height:15px;color:#1a1a1a;font-weight:normal;letter-spacing:-0.266px;-webkit-text-stroke:0.25px #1a1a1a;">Completed</div><div class="t" style="left:1084px;top:421.0px;font-size:11px;line-height:15px;color:#1a1a1a;font-weight:normal;letter-spacing:-0.25px;-webkit-text-stroke:0.25px #1a1a1a;">Not_Created</div><div class="t" style="left:1171px;top:421.0px;font-size:11px;line-height:15px;color:#1a1a1a;font-weight:normal;letter-spacing:-0.266px;-webkit-text-stroke:0.25px #1a1a1a;">Completed</div><div class="t" style="right:422.5px;top:421.0px;font-size:11px;line-height:15px;color:#1a1a1a;font-weight:normal;letter-spacing:0px;-webkit-text-stroke:0.25px #1a1a1a;">04/03/2024 00:00</div><div class="b" style="left:23px;top:436px;width:1240px;height:15px;background:#c0e6f5;"></div><div class="b" style="left:23px;top:451px;width:1240px;height:1px;background:#83cbeb;"></div><div class="t" style="left:-288.5px;width:600px;text-align:center;top:436.75px;font-size:11.5px;line-height:15.5px;color:#3a30f0;font-weight:normal;letter-spacing:0px;-webkit-text-stroke:0.2px #3a30f0;">14</div><div class="b" style="left:0px;top:451px;width:22px;height:1px;background:#d6d6d6;"></div><div class="t" style="left:120px;top:437.0px;font-size:11px;line-height:15px;color:#1a1a1a;font-weight:normal;letter-spacing:-0.257px;-webkit-text-stroke:0.25px #1a1a1a;">J Jonah</div><div class="t" style="left:243px;top:437.0px;font-size:11px;line-height:15px;color:#1a1a1a;font-weight:normal;letter-spacing:-0.269px;-webkit-text-stroke:0.25px #1a1a1a;">Jamieson</div><div class="t" style="left:361px;top:437.0px;font-size:11px;line-height:15px;color:#1a1a1a;font-weight:normal;letter-spacing:-0.234px;-webkit-text-stroke:0.25px #1a1a1a;">Consultant</div><div class="t" style="left:456px;top:437.0px;font-size:11px;line-height:15px;color:#1a1a1a;font-weight:normal;letter-spacing:-0.31px;-webkit-text-stroke:0.25px #1a1a1a;">TEST106</div><div class="t" style="left:697px;top:437.0px;font-size:11px;line-height:15px;color:#1a1a1a;font-weight:normal;letter-spacing:-0.098px;-webkit-text-stroke:0.25px #1a1a1a;">2023/2024</div><div class="t" style="left:862px;top:437.0px;font-size:11px;line-height:15px;color:#1a1a1a;font-weight:normal;letter-spacing:-0.219px;-webkit-text-stroke:0.25px #1a1a1a;">Zone Testshire And Cute</div><div class="t" style="left:984px;top:437.0px;font-size:11px;line-height:15px;color:#1a1a1a;font-weight:normal;letter-spacing:-0.266px;-webkit-text-stroke:0.25px #1a1a1a;">Completed</div><div class="t" style="left:1084px;top:437.0px;font-size:11px;line-height:15px;color:#1a1a1a;font-weight:normal;letter-spacing:-0.266px;-webkit-text-stroke:0.25px #1a1a1a;">Completed</div><div class="t" style="right:422.5px;top:437.0px;font-size:11px;line-height:15px;color:#1a1a1a;font-weight:normal;letter-spacing:0px;-webkit-text-stroke:0.25px #1a1a1a;">18/03/2024 00:00</div><div class="b" style="left:23px;top:452px;width:1240px;height:15px;background:#fff;"></div><div class="b" style="left:23px;top:467px;width:1240px;height:1px;background:#83cbeb;"></div><div class="b" style="left:117px;top:452px;width:1px;height:15px;background:#e3e3e3;"></div><div class="b" style="left:240px;top:452px;width:1px;height:15px;background:#e3e3e3;"></div><div class="b" style="left:358px;top:452px;width:1px;height:15px;background:#e3e3e3;"></div><div class="b" style="left:453px;top:452px;width:1px;height:15px;background:#e3e3e3;"></div><div class="b" style="left:593px;top:452px;width:1px;height:15px;background:#e3e3e3;"></div><div class="b" style="left:694px;top:452px;width:1px;height:15px;background:#e3e3e3;"></div><div class="b" style="left:767px;top:452px;width:1px;height:15px;background:#e3e3e3;"></div><div class="b" style="left:859px;top:452px;width:1px;height:15px;background:#e3e3e3;"></div><div class="b" style="left:981px;top:452px;width:1px;height:15px;background:#e3e3e3;"></div><div class="b" style="left:1081px;top:452px;width:1px;height:15px;background:#e3e3e3;"></div><div class="b" style="left:1168px;top:452px;width:1px;height:15px;background:#e3e3e3;"></div><div class="t" style="left:-288.5px;width:600px;text-align:center;top:452.75px;font-size:11.5px;line-height:15.5px;color:#3a30f0;font-weight:normal;letter-spacing:0px;-webkit-text-stroke:0.2px #3a30f0;">16</div><div class="b" style="left:0px;top:467px;width:22px;height:1px;background:#d6d6d6;"></div><div class="t" style="left:120px;top:453.0px;font-size:11px;line-height:15px;color:#1a1a1a;font-weight:normal;letter-spacing:-0.257px;-webkit-text-stroke:0.25px #1a1a1a;">Clark</div><div class="t" style="left:243px;top:453.0px;font-size:11px;line-height:15px;color:#1a1a1a;font-weight:normal;letter-spacing:-0.302px;-webkit-text-stroke:0.25px #1a1a1a;">Kent</div><div class="t" style="left:361px;top:453.0px;font-size:11px;line-height:15px;color:#1a1a1a;font-weight:normal;letter-spacing:-0.234px;-webkit-text-stroke:0.25px #1a1a1a;">Consultant</div><div class="t" style="left:456px;top:453.0px;font-size:11px;line-height:15px;color:#1a1a1a;font-weight:normal;letter-spacing:-0.31px;-webkit-text-stroke:0.25px #1a1a1a;">TEST006</div><div class="t" style="left:697px;top:453.0px;font-size:11px;line-height:15px;color:#1a1a1a;font-weight:normal;letter-spacing:-0.098px;-webkit-text-stroke:0.25px #1a1a1a;">2023/2024</div><div class="t" style="left:862px;top:453.0px;font-size:11px;line-height:15px;color:#1a1a1a;font-weight:normal;letter-spacing:-0.219px;-webkit-text-stroke:0.25px #1a1a1a;">Zone Testshire And Cute</div><div class="t" style="left:984px;top:453.0px;font-size:11px;line-height:15px;color:#1a1a1a;font-weight:normal;letter-spacing:-0.266px;-webkit-text-stroke:0.25px #1a1a1a;">Completed</div><div class="t" style="left:1084px;top:453.0px;font-size:11px;line-height:15px;color:#1a1a1a;font-weight:normal;letter-spacing:-0.266px;-webkit-text-stroke:0.25px #1a1a1a;">Completed</div><div class="t" style="right:422.5px;top:453.0px;font-size:11px;line-height:15px;color:#1a1a1a;font-weight:normal;letter-spacing:0px;-webkit-text-stroke:0.25px #1a1a1a;">07/06/2024 00:00</div><div class="b" style="left:23px;top:468px;width:1240px;height:15px;background:#c0e6f5;"></div><div class="b" style="left:23px;top:483px;width:1240px;height:1px;background:#83cbeb;"></div><div class="t" style="left:-288.5px;width:600px;text-align:center;top:468.75px;font-size:11.5px;line-height:15.5px;color:#3a30f0;font-weight:normal;letter-spacing:0px;-webkit-text-stroke:0.2px #3a30f0;">17</div><div class="b" style="left:0px;top:483px;width:22px;height:1px;background:#d6d6d6;"></div><div class="t" style="left:25px;top:469.0px;font-size:11px;line-height:15px;color:#1a1a1a;font-weight:normal;letter-spacing:-0.464px;-webkit-text-stroke:0.25px #1a1a1a;">Dr</div><div class="t" style="left:120px;top:469.0px;font-size:11px;line-height:15px;color:#1a1a1a;font-weight:normal;letter-spacing:-0.332px;-webkit-text-stroke:0.25px #1a1a1a;">Mohammad</div><div class="t" style="left:243px;top:469.0px;font-size:11px;line-height:15px;color:#1a1a1a;font-weight:normal;letter-spacing:-0.294px;-webkit-text-stroke:0.25px #1a1a1a;">Khannae</div><div class="t" style="left:361px;top:469.0px;font-size:11px;line-height:15px;color:#1a1a1a;font-weight:normal;letter-spacing:-0.234px;-webkit-text-stroke:0.25px #1a1a1a;">Consultant</div><div class="t" style="left:456px;top:469.0px;font-size:11px;line-height:15px;color:#1a1a1a;font-weight:normal;letter-spacing:-0.314px;-webkit-text-stroke:0.25px #1a1a1a;">MK23654</div><div class="t" style="left:697px;top:469.0px;font-size:11px;line-height:15px;color:#1a1a1a;font-weight:normal;letter-spacing:-0.098px;-webkit-text-stroke:0.25px #1a1a1a;">2023/2024</div><div class="t" style="left:862px;top:469.0px;font-size:11px;line-height:15px;color:#1a1a1a;font-weight:normal;letter-spacing:-0.219px;-webkit-text-stroke:0.25px #1a1a1a;">Zone Testshire And Cute</div><div class="t" style="left:984px;top:469.0px;font-size:11px;line-height:15px;color:#1a1a1a;font-weight:normal;letter-spacing:-0.266px;-webkit-text-stroke:0.25px #1a1a1a;">Completed</div><div class="t" style="left:1084px;top:469.0px;font-size:11px;line-height:15px;color:#1a1a1a;font-weight:normal;letter-spacing:-0.266px;-webkit-text-stroke:0.25px #1a1a1a;">Completed</div><div class="t" style="right:422.5px;top:469.0px;font-size:11px;line-height:15px;color:#1a1a1a;font-weight:normal;letter-spacing:0px;-webkit-text-stroke:0.25px #1a1a1a;">17/04/2024 00:00</div><div class="b" style="left:23px;top:484px;width:1240px;height:15px;background:#fff;"></div><div class="b" style="left:23px;top:499px;width:1240px;height:1px;background:#83cbeb;"></div><div class="b" style="left:117px;top:484px;width:1px;height:15px;background:#e3e3e3;"></div><div class="b" style="left:240px;top:484px;width:1px;height:15px;background:#e3e3e3;"></div><div class="b" style="left:358px;top:484px;width:1px;height:15px;background:#e3e3e3;"></div><div class="b" style="left:453px;top:484px;width:1px;height:15px;background:#e3e3e3;"></div><div class="b" style="left:593px;top:484px;width:1px;height:15px;background:#e3e3e3;"></div><div class="b" style="left:694px;top:484px;width:1px;height:15px;background:#e3e3e3;"></div><div class="b" style="left:767px;top:484px;width:1px;height:15px;background:#e3e3e3;"></div><div class="b" style="left:859px;top:484px;width:1px;height:15px;background:#e3e3e3;"></div><div class="b" style="left:981px;top:484px;width:1px;height:15px;background:#e3e3e3;"></div><div class="b" style="left:1081px;top:484px;width:1px;height:15px;background:#e3e3e3;"></div><div class="b" style="left:1168px;top:484px;width:1px;height:15px;background:#e3e3e3;"></div><div class="t" style="left:-288.5px;width:600px;text-align:center;top:484.75px;font-size:11.5px;line-height:15.5px;color:#3a30f0;font-weight:normal;letter-spacing:0px;-webkit-text-stroke:0.2px #3a30f0;">18</div><div class="b" style="left:0px;top:499px;width:22px;height:1px;background:#d6d6d6;"></div><div class="t" style="left:25px;top:485.0px;font-size:11px;line-height:15px;color:#1a1a1a;font-weight:normal;letter-spacing:-0.366px;-webkit-text-stroke:0.25px #1a1a1a;">Mrs</div><div class="t" style="left:120px;top:485.0px;font-size:11px;line-height:15px;color:#1a1a1a;font-weight:normal;letter-spacing:-0.269px;-webkit-text-stroke:0.25px #1a1a1a;">Linda</div><div class="t" style="left:243px;top:485.0px;font-size:11px;line-height:15px;color:#1a1a1a;font-weight:normal;letter-spacing:-0.259px;-webkit-text-stroke:0.25px #1a1a1a;">Kirkwood</div><div class="t" style="left:361px;top:485.0px;font-size:11px;line-height:15px;color:#1a1a1a;font-weight:normal;letter-spacing:-0.234px;-webkit-text-stroke:0.25px #1a1a1a;">Consultant</div><div class="t" style="left:456px;top:485.0px;font-size:11px;line-height:15px;color:#1a1a1a;font-weight:normal;letter-spacing:-0.294px;-webkit-text-stroke:0.25px #1a1a1a;">LK32323</div><div class="t" style="left:697px;top:485.0px;font-size:11px;line-height:15px;color:#1a1a1a;font-weight:normal;letter-spacing:-0.098px;-webkit-text-stroke:0.25px #1a1a1a;">2023/2024</div><div class="t" style="left:862px;top:485.0px;font-size:11px;line-height:15px;color:#1a1a1a;font-weight:normal;letter-spacing:-0.219px;-webkit-text-stroke:0.25px #1a1a1a;">Zone Testshire And Cute</div><div class="t" style="left:984px;top:485.0px;font-size:11px;line-height:15px;color:#1a1a1a;font-weight:normal;letter-spacing:-0.266px;-webkit-text-stroke:0.25px #1a1a1a;">Completed</div><div class="t" style="left:1084px;top:485.0px;font-size:11px;line-height:15px;color:#1a1a1a;font-weight:normal;letter-spacing:-0.266px;-webkit-text-stroke:0.25px #1a1a1a;">Completed</div><div class="t" style="right:422.5px;top:485.0px;font-size:11px;line-height:15px;color:#1a1a1a;font-weight:normal;letter-spacing:0px;-webkit-text-stroke:0.25px #1a1a1a;">22/02/2024 00:00</div><div class="b" style="left:23px;top:500px;width:1240px;height:15px;background:#c0e6f5;"></div><div class="b" style="left:23px;top:515px;width:1240px;height:1px;background:#83cbeb;"></div><div class="t" style="left:-288.5px;width:600px;text-align:center;top:500.75px;font-size:11.5px;line-height:15.5px;color:#3a30f0;font-weight:normal;letter-spacing:0px;-webkit-text-stroke:0.2px #3a30f0;">19</div><div class="b" style="left:0px;top:515px;width:22px;height:1px;background:#d6d6d6;"></div><div class="t" style="left:25px;top:501.0px;font-size:11px;line-height:15px;color:#1a1a1a;font-weight:normal;letter-spacing:-0.464px;-webkit-text-stroke:0.25px #1a1a1a;">Dr</div><div class="t" style="left:120px;top:501.0px;font-size:11px;line-height:15px;color:#1a1a1a;font-weight:normal;letter-spacing:-0.326px;-webkit-text-stroke:0.25px #1a1a1a;">Buzz</div><div class="t" style="left:243px;top:501.0px;font-size:11px;line-height:15px;color:#1a1a1a;font-weight:normal;letter-spacing:-0.226px;-webkit-text-stroke:0.25px #1a1a1a;">Lightyear</div><div class="t" style="left:361px;top:501.0px;font-size:11px;line-height:15px;color:#1a1a1a;font-weight:normal;letter-spacing:-0.234px;-webkit-text-stroke:0.25px #1a1a1a;">Consultant</div><div class="t" style="left:456px;top:501.0px;font-size:11px;line-height:15px;color:#1a1a1a;font-weight:normal;letter-spacing:-0.277px;-webkit-text-stroke:0.25px #1a1a1a;">buzz123</div><div class="t" style="left:697px;top:501.0px;font-size:11px;line-height:15px;color:#1a1a1a;font-weight:normal;letter-spacing:-0.098px;-webkit-text-stroke:0.25px #1a1a1a;">2023/2024</div><div class="t" style="left:862px;top:501.0px;font-size:11px;line-height:15px;color:#1a1a1a;font-weight:normal;letter-spacing:-0.219px;-webkit-text-stroke:0.25px #1a1a1a;">Zone Testshire And Cute</div><div class="t" style="left:984px;top:501.0px;font-size:11px;line-height:15px;color:#1a1a1a;font-weight:normal;letter-spacing:-0.266px;-webkit-text-stroke:0.25px #1a1a1a;">Completed</div><div class="t" style="left:1084px;top:501.0px;font-size:11px;line-height:15px;color:#1a1a1a;font-weight:normal;letter-spacing:-0.266px;-webkit-text-stroke:0.25px #1a1a1a;">Completed</div><div class="t" style="right:422.5px;top:501.0px;font-size:11px;line-height:15px;color:#1a1a1a;font-weight:normal;letter-spacing:0px;-webkit-text-stroke:0.25px #1a1a1a;">27/05/2024 00:00</div><div class="b" style="left:23px;top:516px;width:1240px;height:15px;background:#fff;"></div><div class="b" style="left:23px;top:531px;width:1240px;height:1px;background:#83cbeb;"></div><div class="b" style="left:117px;top:516px;width:1px;height:15px;background:#e3e3e3;"></div><div class="b" style="left:240px;top:516px;width:1px;height:15px;background:#e3e3e3;"></div><div class="b" style="left:358px;top:516px;width:1px;height:15px;background:#e3e3e3;"></div><div class="b" style="left:453px;top:516px;width:1px;height:15px;background:#e3e3e3;"></div><div class="b" style="left:593px;top:516px;width:1px;height:15px;background:#e3e3e3;"></div><div class="b" style="left:694px;top:516px;width:1px;height:15px;background:#e3e3e3;"></div><div class="b" style="left:767px;top:516px;width:1px;height:15px;background:#e3e3e3;"></div><div class="b" style="left:859px;top:516px;width:1px;height:15px;background:#e3e3e3;"></div><div class="b" style="left:981px;top:516px;width:1px;height:15px;background:#e3e3e3;"></div><div class="b" style="left:1081px;top:516px;width:1px;height:15px;background:#e3e3e3;"></div><div class="b" style="left:1168px;top:516px;width:1px;height:15px;background:#e3e3e3;"></div><div class="t" style="left:-288.5px;width:600px;text-align:center;top:516.75px;font-size:11.5px;line-height:15.5px;color:#3a30f0;font-weight:normal;letter-spacing:0px;-webkit-text-stroke:0.2px #3a30f0;">20</div><div class="b" style="left:0px;top:531px;width:22px;height:1px;background:#d6d6d6;"></div><div class="t" style="left:120px;top:517.0px;font-size:11px;line-height:15px;color:#1a1a1a;font-weight:normal;letter-spacing:-0.236px;-webkit-text-stroke:0.25px #1a1a1a;">William</div><div class="t" style="left:243px;top:517.0px;font-size:11px;line-height:15px;color:#1a1a1a;font-weight:normal;letter-spacing:-0.294px;-webkit-text-stroke:0.25px #1a1a1a;">Liu</div><div class="t" style="left:361px;top:517.0px;font-size:11px;line-height:15px;color:#1a1a1a;font-weight:normal;letter-spacing:-0.201px;-webkit-text-stroke:0.25px #1a1a1a;">Clinical Fellow</div><div class="t" style="left:456px;top:517.0px;font-size:11px;line-height:15px;color:#1a1a1a;font-weight:normal;letter-spacing:-0.253px;-webkit-text-stroke:0.25px #1a1a1a;">wliu</div><div class="t" style="left:697px;top:517.0px;font-size:11px;line-height:15px;color:#1a1a1a;font-weight:normal;letter-spacing:-0.098px;-webkit-text-stroke:0.25px #1a1a1a;">2023/2024</div><div class="t" style="left:862px;top:517.0px;font-size:11px;line-height:15px;color:#1a1a1a;font-weight:normal;letter-spacing:-0.219px;-webkit-text-stroke:0.25px #1a1a1a;">Zone Testshire And Cute</div><div class="t" style="left:984px;top:517.0px;font-size:11px;line-height:15px;color:#1a1a1a;font-weight:normal;letter-spacing:-0.266px;-webkit-text-stroke:0.25px #1a1a1a;">Completed</div><div class="t" style="left:1084px;top:517.0px;font-size:11px;line-height:15px;color:#1a1a1a;font-weight:normal;letter-spacing:-0.25px;-webkit-text-stroke:0.25px #1a1a1a;">Not_Created</div><div class="t" style="left:1171px;top:517.0px;font-size:11px;line-height:15px;color:#1a1a1a;font-weight:normal;letter-spacing:-0.266px;-webkit-text-stroke:0.25px #1a1a1a;">Completed</div><div class="t" style="right:422.5px;top:517.0px;font-size:11px;line-height:15px;color:#1a1a1a;font-weight:normal;letter-spacing:0px;-webkit-text-stroke:0.25px #1a1a1a;">08/03/2024 00:00</div><div class="b" style="left:23px;top:532px;width:1240px;height:15px;background:#c0e6f5;"></div><div class="b" style="left:23px;top:547px;width:1240px;height:1px;background:#83cbeb;"></div><div class="t" style="left:-288.5px;width:600px;text-align:center;top:532.75px;font-size:11.5px;line-height:15.5px;color:#3a30f0;font-weight:normal;letter-spacing:0px;-webkit-text-stroke:0.2px #3a30f0;">21</div><div class="b" style="left:0px;top:547px;width:22px;height:1px;background:#d6d6d6;"></div><div class="t" style="left:120px;top:533.0px;font-size:11px;line-height:15px;color:#1a1a1a;font-weight:normal;letter-spacing:-0.263px;-webkit-text-stroke:0.25px #1a1a1a;">Peter</div><div class="t" style="left:243px;top:533.0px;font-size:11px;line-height:15px;color:#1a1a1a;font-weight:normal;letter-spacing:-0.253px;-webkit-text-stroke:0.25px #1a1a1a;">Hall</div><div class="t" style="left:361px;top:533.0px;font-size:11px;line-height:15px;color:#1a1a1a;font-weight:normal;letter-spacing:-0.234px;-webkit-text-stroke:0.25px #1a1a1a;">Consultant</div><div class="t" style="left:456px;top:533.0px;font-size:11px;line-height:15px;color:#1a1a1a;font-weight:normal;letter-spacing:-0.297px;-webkit-text-stroke:0.25px #1a1a1a;">PH123456</div><div class="t" style="left:697px;top:533.0px;font-size:11px;line-height:15px;color:#1a1a1a;font-weight:normal;letter-spacing:-0.098px;-webkit-text-stroke:0.25px #1a1a1a;">2023/2024</div><div class="t" style="left:862px;top:533.0px;font-size:11px;line-height:15px;color:#1a1a1a;font-weight:normal;letter-spacing:-0.219px;-webkit-text-stroke:0.25px #1a1a1a;">Zone Testshire And Cute</div><div class="t" style="left:984px;top:533.0px;font-size:11px;line-height:15px;color:#1a1a1a;font-weight:normal;letter-spacing:-0.266px;-webkit-text-stroke:0.25px #1a1a1a;">Completed</div><div class="t" style="left:1084px;top:533.0px;font-size:11px;line-height:15px;color:#1a1a1a;font-weight:normal;letter-spacing:-0.266px;-webkit-text-stroke:0.25px #1a1a1a;">Completed</div><div class="t" style="right:422.5px;top:533.0px;font-size:11px;line-height:15px;color:#1a1a1a;font-weight:normal;letter-spacing:0px;-webkit-text-stroke:0.25px #1a1a1a;">16/08/2024 00:00</div><div class="b" style="left:23px;top:548px;width:1240px;height:15px;background:#fff;"></div><div class="b" style="left:23px;top:563px;width:1240px;height:1px;background:#83cbeb;"></div><div class="b" style="left:117px;top:548px;width:1px;height:15px;background:#e3e3e3;"></div><div class="b" style="left:240px;top:548px;width:1px;height:15px;background:#e3e3e3;"></div><div class="b" style="left:358px;top:548px;width:1px;height:15px;background:#e3e3e3;"></div><div class="b" style="left:453px;top:548px;width:1px;height:15px;background:#e3e3e3;"></div><div class="b" style="left:593px;top:548px;width:1px;height:15px;background:#e3e3e3;"></div><div class="b" style="left:694px;top:548px;width:1px;height:15px;background:#e3e3e3;"></div><div class="b" style="left:767px;top:548px;width:1px;height:15px;background:#e3e3e3;"></div><div class="b" style="left:859px;top:548px;width:1px;height:15px;background:#e3e3e3;"></div><div class="b" style="left:981px;top:548px;width:1px;height:15px;background:#e3e3e3;"></div><div class="b" style="left:1081px;top:548px;width:1px;height:15px;background:#e3e3e3;"></div><div class="b" style="left:1168px;top:548px;width:1px;height:15px;background:#e3e3e3;"></div><div class="t" style="left:-288.5px;width:600px;text-align:center;top:548.75px;font-size:11.5px;line-height:15.5px;color:#3a30f0;font-weight:normal;letter-spacing:0px;-webkit-text-stroke:0.2px #3a30f0;">22</div><div class="b" style="left:0px;top:563px;width:22px;height:1px;background:#d6d6d6;"></div><div class="t" style="left:120px;top:549.0px;font-size:11px;line-height:15px;color:#1a1a1a;font-weight:normal;letter-spacing:-0.294px;-webkit-text-stroke:0.25px #1a1a1a;">Guest</div><div class="t" style="left:243px;top:549.0px;font-size:11px;line-height:15px;color:#1a1a1a;font-weight:normal;letter-spacing:-0.31px;-webkit-text-stroke:0.25px #1a1a1a;">User</div><div class="t" style="left:361px;top:549.0px;font-size:11px;line-height:15px;color:#1a1a1a;font-weight:normal;letter-spacing:-0.234px;-webkit-text-stroke:0.25px #1a1a1a;">Consultant</div><div class="t" style="left:456px;top:549.0px;font-size:11px;line-height:15px;color:#1a1a1a;font-weight:normal;letter-spacing:-0.322px;-webkit-text-stroke:0.25px #1a1a1a;">GUEST024</div><div class="t" style="left:697px;top:549.0px;font-size:11px;line-height:15px;color:#1a1a1a;font-weight:normal;letter-spacing:-0.098px;-webkit-text-stroke:0.25px #1a1a1a;">2023/2024</div><div class="t" style="left:862px;top:549.0px;font-size:11px;line-height:15px;color:#1a1a1a;font-weight:normal;letter-spacing:-0.219px;-webkit-text-stroke:0.25px #1a1a1a;">Zone Testshire And Cute</div><div class="t" style="left:984px;top:549.0px;font-size:11px;line-height:15px;color:#1a1a1a;font-weight:normal;letter-spacing:-0.266px;-webkit-text-stroke:0.25px #1a1a1a;">Completed</div><div class="t" style="left:1084px;top:549.0px;font-size:11px;line-height:15px;color:#1a1a1a;font-weight:normal;letter-spacing:-0.266px;-webkit-text-stroke:0.25px #1a1a1a;">Completed</div><div class="t" style="right:422.5px;top:549.0px;font-size:11px;line-height:15px;color:#1a1a1a;font-weight:normal;letter-spacing:0px;-webkit-text-stroke:0.25px #1a1a1a;">24/10/2024 00:00</div><div class="b" style="left:23px;top:564px;width:1240px;height:15px;background:#c0e6f5;"></div><div class="b" style="left:23px;top:579px;width:1240px;height:1px;background:#83cbeb;"></div><div class="t" style="left:-288.5px;width:600px;text-align:center;top:564.75px;font-size:11.5px;line-height:15.5px;color:#3a30f0;font-weight:normal;letter-spacing:0px;-webkit-text-stroke:0.2px #3a30f0;">23</div><div class="b" style="left:0px;top:579px;width:22px;height:1px;background:#d6d6d6;"></div><div class="t" style="left:25px;top:565.0px;font-size:11px;line-height:15px;color:#1a1a1a;font-weight:normal;letter-spacing:-0.366px;-webkit-text-stroke:0.25px #1a1a1a;">Mrs</div><div class="t" style="left:120px;top:565.0px;font-size:11px;line-height:15px;color:#1a1a1a;font-weight:normal;letter-spacing:-0.326px;-webkit-text-stroke:0.25px #1a1a1a;">Mary</div><div class="t" style="left:243px;top:565.0px;font-size:11px;line-height:15px;color:#1a1a1a;font-weight:normal;letter-spacing:-0.312px;-webkit-text-stroke:0.25px #1a1a1a;">Moore</div><div class="t" style="left:361px;top:565.0px;font-size:11px;line-height:15px;color:#1a1a1a;font-weight:normal;letter-spacing:-0.234px;-webkit-text-stroke:0.25px #1a1a1a;">Consultant</div><div class="t" style="left:456px;top:565.0px;font-size:11px;line-height:15px;color:#1a1a1a;font-weight:normal;letter-spacing:-0.326px;-webkit-text-stroke:0.25px #1a1a1a;">MM12365</div><div class="t" style="left:697px;top:565.0px;font-size:11px;line-height:15px;color:#1a1a1a;font-weight:normal;letter-spacing:-0.098px;-webkit-text-stroke:0.25px #1a1a1a;">2023/2024</div><div class="t" style="left:862px;top:565.0px;font-size:11px;line-height:15px;color:#1a1a1a;font-weight:normal;letter-spacing:-0.219px;-webkit-text-stroke:0.25px #1a1a1a;">Zone Testshire And Cute</div><div class="t" style="left:984px;top:565.0px;font-size:11px;line-height:15px;color:#1a1a1a;font-weight:normal;letter-spacing:-0.266px;-webkit-text-stroke:0.25px #1a1a1a;">Completed</div><div class="t" style="left:1084px;top:565.0px;font-size:11px;line-height:15px;color:#1a1a1a;font-weight:normal;letter-spacing:-0.266px;-webkit-text-stroke:0.25px #1a1a1a;">Completed</div><div class="t" style="right:422.5px;top:565.0px;font-size:11px;line-height:15px;color:#1a1a1a;font-weight:normal;letter-spacing:0px;-webkit-text-stroke:0.25px #1a1a1a;">27/03/2024 00:00</div><div class="b" style="left:23px;top:580px;width:1240px;height:15px;background:#fff;"></div><div class="b" style="left:23px;top:595px;width:1240px;height:1px;background:#83cbeb;"></div><div class="b" style="left:117px;top:580px;width:1px;height:15px;background:#e3e3e3;"></div><div class="b" style="left:240px;top:580px;width:1px;height:15px;background:#e3e3e3;"></div><div class="b" style="left:358px;top:580px;width:1px;height:15px;background:#e3e3e3;"></div><div class="b" style="left:453px;top:580px;width:1px;height:15px;background:#e3e3e3;"></div><div class="b" style="left:593px;top:580px;width:1px;height:15px;background:#e3e3e3;"></div><div class="b" style="left:694px;top:580px;width:1px;height:15px;background:#e3e3e3;"></div><div class="b" style="left:767px;top:580px;width:1px;height:15px;background:#e3e3e3;"></div><div class="b" style="left:859px;top:580px;width:1px;height:15px;background:#e3e3e3;"></div><div class="b" style="left:981px;top:580px;width:1px;height:15px;background:#e3e3e3;"></div><div class="b" style="left:1081px;top:580px;width:1px;height:15px;background:#e3e3e3;"></div><div class="b" style="left:1168px;top:580px;width:1px;height:15px;background:#e3e3e3;"></div><div class="t" style="left:-288.5px;width:600px;text-align:center;top:580.75px;font-size:11.5px;line-height:15.5px;color:#3a30f0;font-weight:normal;letter-spacing:0px;-webkit-text-stroke:0.2px #3a30f0;">24</div><div class="b" style="left:0px;top:595px;width:22px;height:1px;background:#d6d6d6;"></div><div class="t" style="left:25px;top:581.0px;font-size:11px;line-height:15px;color:#1a1a1a;font-weight:normal;letter-spacing:-0.464px;-webkit-text-stroke:0.25px #1a1a1a;">Dr</div><div class="t" style="left:120px;top:581.0px;font-size:11px;line-height:15px;color:#1a1a1a;font-weight:normal;letter-spacing:-0.31px;-webkit-text-stroke:0.25px #1a1a1a;">Glen</div><div class="t" style="left:243px;top:581.0px;font-size:11px;line-height:15px;color:#1a1a1a;font-weight:normal;letter-spacing:-0.276px;-webkit-text-stroke:0.25px #1a1a1a;">Quagmire</div><div class="t" style="left:361px;top:581.0px;font-size:11px;line-height:15px;color:#1a1a1a;font-weight:normal;letter-spacing:-0.234px;-webkit-text-stroke:0.25px #1a1a1a;">Consultant</div><div class="t" style="left:456px;top:581.0px;font-size:11px;line-height:15px;color:#1a1a1a;font-weight:normal;letter-spacing:-0.286px;-webkit-text-stroke:0.25px #1a1a1a;">gq12345</div><div class="t" style="left:697px;top:581.0px;font-size:11px;line-height:15px;color:#1a1a1a;font-weight:normal;letter-spacing:-0.098px;-webkit-text-stroke:0.25px #1a1a1a;">2023/2024</div><div class="t" style="left:862px;top:581.0px;font-size:11px;line-height:15px;color:#1a1a1a;font-weight:normal;letter-spacing:-0.219px;-webkit-text-stroke:0.25px #1a1a1a;">Zone Testshire And Cute</div><div class="t" style="left:984px;top:581.0px;font-size:11px;line-height:15px;color:#1a1a1a;font-weight:normal;letter-spacing:-0.266px;-webkit-text-stroke:0.25px #1a1a1a;">Completed</div><div class="t" style="left:1084px;top:581.0px;font-size:11px;line-height:15px;color:#1a1a1a;font-weight:normal;letter-spacing:-0.266px;-webkit-text-stroke:0.25px #1a1a1a;">Completed</div><div class="t" style="right:422.5px;top:581.0px;font-size:11px;line-height:15px;color:#1a1a1a;font-weight:normal;letter-spacing:0px;-webkit-text-stroke:0.25px #1a1a1a;">22/01/2024 00:00</div><div class="b" style="left:23px;top:596px;width:1240px;height:15px;background:#c0e6f5;"></div><div class="b" style="left:23px;top:611px;width:1240px;height:1px;background:#83cbeb;"></div><div class="t" style="left:-288.5px;width:600px;text-align:center;top:596.75px;font-size:11.5px;line-height:15.5px;color:#3a30f0;font-weight:normal;letter-spacing:0px;-webkit-text-stroke:0.2px #3a30f0;">25</div><div class="b" style="left:0px;top:611px;width:22px;height:1px;background:#d6d6d6;"></div><div class="t" style="left:25px;top:597.0px;font-size:11px;line-height:15px;color:#1a1a1a;font-weight:normal;letter-spacing:-0.464px;-webkit-text-stroke:0.25px #1a1a1a;">Dr</div><div class="t" style="left:120px;top:597.0px;font-size:11px;line-height:15px;color:#1a1a1a;font-weight:normal;letter-spacing:-0.318px;-webkit-text-stroke:0.25px #1a1a1a;">John</div><div class="t" style="left:243px;top:597.0px;font-size:11px;line-height:15px;color:#1a1a1a;font-weight:normal;letter-spacing:-0.269px;-webkit-text-stroke:0.25px #1a1a1a;">Smithy</div><div class="t" style="left:361px;top:597.0px;font-size:11px;line-height:15px;color:#1a1a1a;font-weight:normal;letter-spacing:-0.234px;-webkit-text-stroke:0.25px #1a1a1a;">Consultant</div><div class="t" style="left:456px;top:597.0px;font-size:11px;line-height:15px;color:#1a1a1a;font-weight:normal;letter-spacing:-0.29px;-webkit-text-stroke:0.25px #1a1a1a;">JS75896</div><div class="t" style="left:697px;top:597.0px;font-size:11px;line-height:15px;color:#1a1a1a;font-weight:normal;letter-spacing:-0.098px;-webkit-text-stroke:0.25px #1a1a1a;">2023/2024</div><div class="t" style="left:862px;top:597.0px;font-size:11px;line-height:15px;color:#1a1a1a;font-weight:normal;letter-spacing:-0.219px;-webkit-text-stroke:0.25px #1a1a1a;">Zone Testshire And Cute</div><div class="t" style="left:984px;top:597.0px;font-size:11px;line-height:15px;color:#1a1a1a;font-weight:normal;letter-spacing:-0.266px;-webkit-text-stroke:0.25px #1a1a1a;">Completed</div><div class="t" style="left:1084px;top:597.0px;font-size:11px;line-height:15px;color:#1a1a1a;font-weight:normal;letter-spacing:-0.266px;-webkit-text-stroke:0.25px #1a1a1a;">Completed</div><div class="t" style="right:422.5px;top:597.0px;font-size:11px;line-height:15px;color:#1a1a1a;font-weight:normal;letter-spacing:0px;-webkit-text-stroke:0.25px #1a1a1a;">21/03/2024 00:00</div><div class="b" style="left:23px;top:612px;width:1240px;height:15px;background:#fff;"></div><div class="b" style="left:23px;top:627px;width:1240px;height:1px;background:#83cbeb;"></div><div class="b" style="left:117px;top:612px;width:1px;height:15px;background:#e3e3e3;"></div><div class="b" style="left:240px;top:612px;width:1px;height:15px;background:#e3e3e3;"></div><div class="b" style="left:358px;top:612px;width:1px;height:15px;background:#e3e3e3;"></div><div class="b" style="left:453px;top:612px;width:1px;height:15px;background:#e3e3e3;"></div><div class="b" style="left:593px;top:612px;width:1px;height:15px;background:#e3e3e3;"></div><div class="b" style="left:694px;top:612px;width:1px;height:15px;background:#e3e3e3;"></div><div class="b" style="left:767px;top:612px;width:1px;height:15px;background:#e3e3e3;"></div><div class="b" style="left:859px;top:612px;width:1px;height:15px;background:#e3e3e3;"></div><div class="b" style="left:981px;top:612px;width:1px;height:15px;background:#e3e3e3;"></div><div class="b" style="left:1081px;top:612px;width:1px;height:15px;background:#e3e3e3;"></div><div class="b" style="left:1168px;top:612px;width:1px;height:15px;background:#e3e3e3;"></div><div class="t" style="left:-288.5px;width:600px;text-align:center;top:612.75px;font-size:11.5px;line-height:15.5px;color:#3a30f0;font-weight:normal;letter-spacing:0px;-webkit-text-stroke:0.2px #3a30f0;">26</div><div class="b" style="left:0px;top:627px;width:22px;height:1px;background:#d6d6d6;"></div><div class="t" style="left:120px;top:613.0px;font-size:11px;line-height:15px;color:#1a1a1a;font-weight:normal;letter-spacing:-0.342px;-webkit-text-stroke:0.25px #1a1a1a;">Jim</div><div class="t" style="left:243px;top:613.0px;font-size:11px;line-height:15px;color:#1a1a1a;font-weight:normal;letter-spacing:-0.312px;-webkit-text-stroke:0.25px #1a1a1a;">Smyth</div><div class="t" style="left:361px;top:613.0px;font-size:11px;line-height:15px;color:#1a1a1a;font-weight:normal;letter-spacing:-0.234px;-webkit-text-stroke:0.25px #1a1a1a;">Consultant</div><div class="t" style="left:456px;top:613.0px;font-size:11px;line-height:15px;color:#1a1a1a;font-weight:normal;letter-spacing:-0.31px;-webkit-text-stroke:0.25px #1a1a1a;">TEST081</div><div class="t" style="left:697px;top:613.0px;font-size:11px;line-height:15px;color:#1a1a1a;font-weight:normal;letter-spacing:-0.098px;-webkit-text-stroke:0.25px #1a1a1a;">2023/2024</div><div class="t" style="left:862px;top:613.0px;font-size:11px;line-height:15px;color:#1a1a1a;font-weight:normal;letter-spacing:-0.219px;-webkit-text-stroke:0.25px #1a1a1a;">Zone Testshire And Cute</div><div class="t" style="left:984px;top:613.0px;font-size:11px;line-height:15px;color:#1a1a1a;font-weight:normal;letter-spacing:-0.266px;-webkit-text-stroke:0.25px #1a1a1a;">Completed</div><div class="t" style="left:1084px;top:613.0px;font-size:11px;line-height:15px;color:#1a1a1a;font-weight:normal;letter-spacing:-0.266px;-webkit-text-stroke:0.25px #1a1a1a;">Completed</div><div class="t" style="right:422.5px;top:613.0px;font-size:11px;line-height:15px;color:#1a1a1a;font-weight:normal;letter-spacing:0px;-webkit-text-stroke:0.25px #1a1a1a;">15/11/2023 00:00</div><div class="b" style="left:23px;top:628px;width:1240px;height:15px;background:#c0e6f5;"></div><div class="b" style="left:23px;top:643px;width:1240px;height:1px;background:#83cbeb;"></div><div class="t" style="left:-288.5px;width:600px;text-align:center;top:628.75px;font-size:11.5px;line-height:15.5px;color:#3a30f0;font-weight:normal;letter-spacing:0px;-webkit-text-stroke:0.2px #3a30f0;">27</div><div class="b" style="left:0px;top:643px;width:22px;height:1px;background:#d6d6d6;"></div><div class="t" style="left:120px;top:629.0px;font-size:11px;line-height:15px;color:#1a1a1a;font-weight:normal;letter-spacing:-0.383px;-webkit-text-stroke:0.25px #1a1a1a;">Gwen</div><div class="t" style="left:243px;top:629.0px;font-size:11px;line-height:15px;color:#1a1a1a;font-weight:normal;letter-spacing:-0.269px;-webkit-text-stroke:0.25px #1a1a1a;">Stacey</div><div class="t" style="left:361px;top:629.0px;font-size:11px;line-height:15px;color:#1a1a1a;font-weight:normal;letter-spacing:-0.234px;-webkit-text-stroke:0.25px #1a1a1a;">Consultant</div><div class="t" style="left:456px;top:629.0px;font-size:11px;line-height:15px;color:#1a1a1a;font-weight:normal;letter-spacing:-0.31px;-webkit-text-stroke:0.25px #1a1a1a;">TEST082</div><div class="t" style="left:697px;top:629.0px;font-size:11px;line-height:15px;color:#1a1a1a;font-weight:normal;letter-spacing:-0.098px;-webkit-text-stroke:0.25px #1a1a1a;">2023/2024</div><div class="t" style="left:862px;top:629.0px;font-size:11px;line-height:15px;color:#1a1a1a;font-weight:normal;letter-spacing:-0.219px;-webkit-text-stroke:0.25px #1a1a1a;">Zone Testshire And Cute</div><div class="t" style="left:984px;top:629.0px;font-size:11px;line-height:15px;color:#1a1a1a;font-weight:normal;letter-spacing:-0.266px;-webkit-text-stroke:0.25px #1a1a1a;">Completed</div><div class="t" style="left:1084px;top:629.0px;font-size:11px;line-height:15px;color:#1a1a1a;font-weight:normal;letter-spacing:-0.266px;-webkit-text-stroke:0.25px #1a1a1a;">Completed</div><div class="t" style="right:422.5px;top:629.0px;font-size:11px;line-height:15px;color:#1a1a1a;font-weight:normal;letter-spacing:0px;-webkit-text-stroke:0.25px #1a1a1a;">07/11/2023 00:00</div><div class="b" style="left:23px;top:644px;width:1240px;height:15px;background:#fff;"></div><div class="b" style="left:23px;top:659px;width:1240px;height:1px;background:#83cbeb;"></div><div class="b" style="left:117px;top:644px;width:1px;height:15px;background:#e3e3e3;"></div><div class="b" style="left:240px;top:644px;width:1px;height:15px;background:#e3e3e3;"></div><div class="b" style="left:358px;top:644px;width:1px;height:15px;background:#e3e3e3;"></div><div class="b" style="left:453px;top:644px;width:1px;height:15px;background:#e3e3e3;"></div><div class="b" style="left:593px;top:644px;width:1px;height:15px;background:#e3e3e3;"></div><div class="b" style="left:694px;top:644px;width:1px;height:15px;background:#e3e3e3;"></div><div class="b" style="left:767px;top:644px;width:1px;height:15px;background:#e3e3e3;"></div><div class="b" style="left:859px;top:644px;width:1px;height:15px;background:#e3e3e3;"></div><div class="b" style="left:981px;top:644px;width:1px;height:15px;background:#e3e3e3;"></div><div class="b" style="left:1081px;top:644px;width:1px;height:15px;background:#e3e3e3;"></div><div class="b" style="left:1168px;top:644px;width:1px;height:15px;background:#e3e3e3;"></div><div class="t" style="left:-288.5px;width:600px;text-align:center;top:644.75px;font-size:11.5px;line-height:15.5px;color:#3a30f0;font-weight:normal;letter-spacing:0px;-webkit-text-stroke:0.2px #3a30f0;">28</div><div class="b" style="left:0px;top:659px;width:22px;height:1px;background:#d6d6d6;"></div><div class="t" style="left:25px;top:645.0px;font-size:11px;line-height:15px;color:#1a1a1a;font-weight:normal;letter-spacing:-0.464px;-webkit-text-stroke:0.25px #1a1a1a;">Dr</div><div class="t" style="left:120px;top:645.0px;font-size:11px;line-height:15px;color:#1a1a1a;font-weight:normal;letter-spacing:-0.279px;-webkit-text-stroke:0.25px #1a1a1a;">Cormoran</div><div class="t" style="left:243px;top:645.0px;font-size:11px;line-height:15px;color:#1a1a1a;font-weight:normal;letter-spacing:-0.225px;-webkit-text-stroke:0.25px #1a1a1a;">Strike</div><div class="t" style="left:361px;top:645.0px;font-size:11px;line-height:15px;color:#1a1a1a;font-weight:normal;letter-spacing:-0.234px;-webkit-text-stroke:0.25px #1a1a1a;">Consultant</div><div class="t" style="left:456px;top:645.0px;font-size:11px;line-height:15px;color:#1a1a1a;font-weight:normal;letter-spacing:-0.277px;-webkit-text-stroke:0.25px #1a1a1a;">cs56789</div><div class="t" style="left:697px;top:645.0px;font-size:11px;line-height:15px;color:#1a1a1a;font-weight:normal;letter-spacing:-0.098px;-webkit-text-stroke:0.25px #1a1a1a;">2023/2024</div><div class="t" style="left:862px;top:645.0px;font-size:11px;line-height:15px;color:#1a1a1a;font-weight:normal;letter-spacing:-0.219px;-webkit-text-stroke:0.25px #1a1a1a;">Zone Testshire And Cute</div><div class="t" style="left:984px;top:645.0px;font-size:11px;line-height:15px;color:#1a1a1a;font-weight:normal;letter-spacing:-0.266px;-webkit-text-stroke:0.25px #1a1a1a;">Completed</div><div class="t" style="left:1084px;top:645.0px;font-size:11px;line-height:15px;color:#1a1a1a;font-weight:normal;letter-spacing:-0.266px;-webkit-text-stroke:0.25px #1a1a1a;">Completed</div><div class="t" style="right:422.5px;top:645.0px;font-size:11px;line-height:15px;color:#1a1a1a;font-weight:normal;letter-spacing:0px;-webkit-text-stroke:0.25px #1a1a1a;">30/04/2024 00:00</div><div class="b" style="left:23px;top:660px;width:1240px;height:15px;background:#c0e6f5;"></div><div class="b" style="left:23px;top:675px;width:1240px;height:1px;background:#83cbeb;"></div><div class="t" style="left:-288.5px;width:600px;text-align:center;top:660.75px;font-size:11.5px;line-height:15.5px;color:#3a30f0;font-weight:normal;letter-spacing:0px;-webkit-text-stroke:0.2px #3a30f0;">29</div><div class="b" style="left:0px;top:675px;width:22px;height:1px;background:#d6d6d6;"></div><div class="t" style="left:120px;top:661.0px;font-size:11px;line-height:15px;color:#1a1a1a;font-weight:normal;letter-spacing:-0.324px;-webkit-text-stroke:0.25px #1a1a1a;">James</div><div class="t" style="left:243px;top:661.0px;font-size:11px;line-height:15px;color:#1a1a1a;font-weight:normal;letter-spacing:-0.223px;-webkit-text-stroke:0.25px #1a1a1a;">Testington</div><div class="t" style="left:361px;top:661.0px;font-size:11px;line-height:15px;color:#1a1a1a;font-weight:normal;letter-spacing:-0.234px;-webkit-text-stroke:0.25px #1a1a1a;">Consultant</div><div class="t" style="left:456px;top:661.0px;font-size:11px;line-height:15px;color:#1a1a1a;font-weight:normal;letter-spacing:-0.286px;-webkit-text-stroke:0.25px #1a1a1a;">JT95175</div><div class="t" style="left:697px;top:661.0px;font-size:11px;line-height:15px;color:#1a1a1a;font-weight:normal;letter-spacing:-0.098px;-webkit-text-stroke:0.25px #1a1a1a;">2023/2024</div><div class="t" style="left:862px;top:661.0px;font-size:11px;line-height:15px;color:#1a1a1a;font-weight:normal;letter-spacing:-0.219px;-webkit-text-stroke:0.25px #1a1a1a;">Zone Testshire And Cute</div><div class="t" style="left:984px;top:661.0px;font-size:11px;line-height:15px;color:#1a1a1a;font-weight:normal;letter-spacing:-0.266px;-webkit-text-stroke:0.25px #1a1a1a;">Completed</div><div class="t" style="left:1084px;top:661.0px;font-size:11px;line-height:15px;color:#1a1a1a;font-weight:normal;letter-spacing:-0.266px;-webkit-text-stroke:0.25px #1a1a1a;">Completed</div><div class="t" style="right:422.5px;top:661.0px;font-size:11px;line-height:15px;color:#1a1a1a;font-weight:normal;letter-spacing:0px;-webkit-text-stroke:0.25px #1a1a1a;">06/03/2024 00:00</div><div class="b" style="left:1263px;top:212px;width:17px;height:464px;background:#f0f0f0;"></div><div class="b" style="left:1265px;top:213px;width:13px;height:462px;background:#f4f4f4;border-radius:6px;"></div><svg class="b" style="left:1264px;top:214px;" width="14" height="10" viewBox="0 0 14 10"><path d="M4 7.8 L7.7 2.5 L11.4 7.8 Z" fill="#6a6a6a" stroke="#6a6a6a" stroke-width="0.6" stroke-linejoin="round"/></svg><div class="b" style="left:1268px;top:226.5px;width:7px;height:377.5px;background:#7f7f7f;border-radius:4px;"></div><svg class="b" style="left:1264px;top:664px;" width="14" height="10" viewBox="0 0 14 10"><path d="M4 3 L7.7 8.2 L11.4 3 Z" fill="#6a6a6a" stroke="#6a6a6a" stroke-width="0.6" stroke-linejoin="round"/></svg><div class="b" style="left:0px;top:675px;width:1280px;height:26px;background:#f0f0f0;"></div><svg class="b" style="left:18px;top:681px;" width="12" height="12" viewBox="0 0 12 12"><path d="M8 1.5 L3.5 6 L8 10.5" fill="none" stroke="#a8a8a8" stroke-width="1"/></svg><svg class="b" style="left:45px;top:681px;" width="12" height="12" viewBox="0 0 12 12"><path d="M4 1.5 L8.5 6 L4 10.5" fill="none" stroke="#a8a8a8" stroke-width="1"/></svg><div class="b" style="left:94px;top:675px;width:126px;height:23px;background:#fff;border-radius:0 0 6px 6px;box-shadow:0 1px 1px rgba(0,0,0,0.10);"></div><div class="t" style="left:100.8px;top:678.0px;font-size:12px;line-height:16px;color:#1f1f1f;font-weight:normal;letter-spacing:-0.06px;-webkit-text-stroke:0.4px #1f1f1f;">Prescribed Interviews</div><div class="b" style="left:101px;top:694px;width:112px;height:2px;background:#107c41;border-radius:1px;"></div><div class="b" style="left:224px;top:680px;width:1px;height:14px;background:#cfcfcf;"></div><svg class="b" style="left:257px;top:680px;" width="13" height="13" viewBox="0 0 13 13"><path d="M6.5 1.5 V11.5 M1.5 6.5 H11.5" stroke="#333" stroke-width="1.2"/></svg><div class="b" style="left:770px;top:682px;width:2px;height:2px;background:#333;"></div><div class="b" style="left:770px;top:686.5px;width:2px;height:2px;background:#333;"></div><div class="b" style="left:770px;top:691px;width:2px;height:2px;background:#333;"></div><div class="b" style="left:781px;top:678px;width:470px;height:19px;background:#f5f5f5;border-radius:6px;"></div><svg class="b" style="left:786px;top:683px;" width="10" height="10" viewBox="0 0 10 10"><path d="M7.5 1 L2.5 5 L7.5 9 Z" fill="#555"/></svg><div class="b" style="left:824.5px;top:684.5px;width:189px;height:7px;background:#7a7a7a;border-radius:4px;"></div><svg class="b" style="left:1252px;top:683px;" width="10" height="10" viewBox="0 0 10 10"><path d="M2.5 1 L7.5 5 L2.5 9 Z" fill="#555"/></svg><div class="b" style="left:0px;top:701px;width:1280px;height:17px;background:#f3f3f3;border-top:1px solid #e0e0e0;box-sizing:border-box;"></div><div class="b" style="left:0px;top:718px;width:1280px;height:2px;background:#2e2e2e;"></div><div class="t" style="left:9.5px;top:703.75px;font-size:9.5px;line-height:13.5px;color:#404040;font-weight:normal;letter-spacing:-0.676px;">Ready</div><div class="t" style="left:46.75px;top:703.75px;font-size:9.5px;line-height:13.5px;color:#404040;font-weight:normal;letter-spacing:-0.216px;">27 of 29 records found</div><svg class="b" style="left:152px;top:704px;" width="15" height="14" viewBox="0 0 15 14"><rect x="1.5" y="1.5" width="11" height="9" fill="none" stroke="#555"/><rect x="1.5" y="1.5" width="11" height="2.5" fill="#555"/><circle cx="10.5" cy="9.5" r="3.3" fill="#f3f3f3" stroke="#444" stroke-width="1.2"/><circle cx="10.5" cy="9.5" r="1.4" fill="#444"/></svg><svg class="b" style="left:179px;top:703px;" width="15" height="15" viewBox="0 0 15 15"><circle cx="6" cy="3" r="1.8" fill="none" stroke="#555"/><path d="M1.5 6 C4 7 8 7 10.5 6 M6 6.5 V10 L3 14 M6 10 L8 12.5" fill="none" stroke="#555"/><path d="M8.5 11.5 L10.5 13.5 L14 9" fill="none" stroke="#555"/></svg><div class="t" style="left:194.5px;top:703.75px;font-size:9.5px;line-height:13.5px;color:#404040;font-weight:normal;letter-spacing:-0.282px;">Accessibility: Good to go</div><svg class="b" style="left:940px;top:703px;" width="15" height="15" viewBox="0 0 15 15"><rect x="1.5" y="2.5" width="11" height="8" rx="1" fill="none" stroke="#555"/><circle cx="10" cy="10.5" r="3" fill="#f3f3f3" stroke="#444"/><circle cx="10" cy="10.5" r="1" fill="#444"/></svg><div class="t" style="left:954.3px;top:703.75px;font-size:9.5px;line-height:13.5px;color:#404040;font-weight:normal;letter-spacing:-0.347px;">Display Settings</div><div class="b" style="left:1032px;top:702px;width:33px;height:16px;background:#dedede;"></div><svg class="b" style="left:1042px;top:704px;" width="13" height="13" viewBox="0 0 13 13"><rect x="0.5" y="0.5" width="11.5" height="11.5" rx="1.5" fill="#333"/><g fill="#fff"><rect x="2" y="2" width="2.3" height="2.3"/><rect x="5.1" y="2" width="2.3" height="2.3"/><rect x="8.2" y="2" width="2.3" height="2.3"/><rect x="2" y="5.1" width="2.3" height="2.3"/><rect x="5.1" y="5.1" width="2.3" height="2.3"/><rect x="8.2" y="5.1" width="2.3" height="2.3"/><rect x="2" y="8.2" width="2.3" height="2.3"/><rect x="5.1" y="8.2" width="2.3" height="2.3"/><rect x="8.2" y="8.2" width="2.3" height="2.3"/></g></svg><svg class="b" style="left:1075px;top:704px;" width="14" height="13" viewBox="0 0 14 13"><rect x="1" y="1" width="12" height="11" rx="1.5" fill="none" stroke="#444" stroke-width="1.3"/><rect x="4" y="3" width="6" height="7" fill="none" stroke="#444"/></svg><svg class="b" style="left:1108px;top:704px;" width="14" height="13" viewBox="0 0 14 13"><rect x="1" y="1" width="12" height="11" rx="1" fill="none" stroke="#444" stroke-width="1.3"/><path d="M1.5 7.5 H7 V1.5" fill="none" stroke="#444" stroke-width="1.2"/></svg><div class="b" style="left:1137px;top:710px;width:7px;height:1.2px;background:#555;"></div><div class="b" style="left:1147px;top:710px;width:83px;height:1px;background:#9a9a9a;"></div><div class="b" style="left:1187px;top:705px;width:4px;height:10px;background:#555;border-radius:1px;"></div><svg class="b" style="left:1233px;top:705px;" width="10" height="10" viewBox="0 0 10 10"><path d="M4 0.5 V8 M0.5 4.2 H7.5" stroke="#555" stroke-width="1.1"/></svg><div class="t" style="left:1252.4px;top:703.75px;font-size:9.5px;line-height:13.5px;color:#404040;font-weight:normal;letter-spacing:-0.899px;">100%</div><svg class="b" style="left:0;top:0" width="1280" height="720" viewBox="0 0 1280 720">
<line x1="362" y1="208" x2="449" y2="208" stroke="#ff0000" stroke-width="4"/>
<circle cx="362" cy="208" r="6" fill="#ff0000"/><circle cx="449" cy="208" r="6" fill="#ff0000"/>
<line x1="988" y1="208" x2="1075" y2="208" stroke="#ff0000" stroke-width="4"/>
<circle cx="988" cy="208" r="6" fill="#ff0000"/><circle cx="1075" cy="208" r="6" fill="#ff0000"/>
<line x1="362" y1="266" x2="286" y2="333" stroke="#ff0000" stroke-width="4"/>
<circle cx="362" cy="266" r="6" fill="#ff0000"/>
<line x1="114.5" y1="586" x2="52.7" y2="695.3" stroke="#ff0000" stroke-width="4"/>
<circle cx="52.7" cy="695.3" r="6" fill="#ff0000"/>
</svg><div class="b" style="left:84px;top:332px;width:260px;height:75px;background:#ff0000;border-radius:10px;"></div><div class="t" style="left:97.9px;top:342.0px;font-size:22px;line-height:26px;color:#fff;font-weight:normal;letter-spacing:0.792px;">Check incomplete role</div><div class="t" style="left:116.5px;top:370.0px;font-size:22px;line-height:26px;color:#fff;font-weight:normal;letter-spacing:0.187px;">(and update SOAR)</div><div class="b" style="left:101px;top:532px;width:261px;height:56px;background:#ff0000;border-radius:10px;"></div><div class="t" style="left:122.9px;top:547.0px;font-size:22px;line-height:26px;color:#fff;font-weight:normal;letter-spacing:0.667px;">Filtered results count</div>
</body></html>
